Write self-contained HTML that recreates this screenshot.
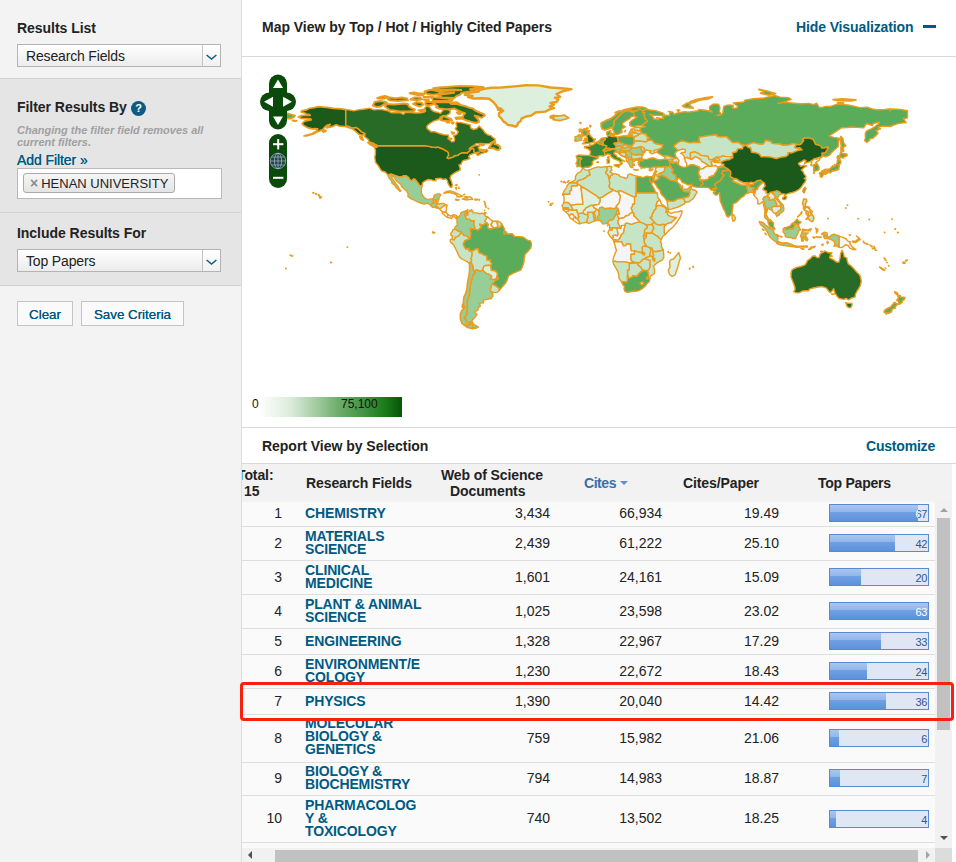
<!DOCTYPE html>
<html lang="en">
<head>
<meta charset="utf-8">
<title>Essential Science Indicators</title>
<style>
*{box-sizing:border-box;margin:0;padding:0}
html,body{width:956px;height:862px;overflow:hidden;background:#fff}
body{font-family:"Liberation Sans",Arial,sans-serif;font-size:14px;color:#222;position:relative}
a{color:#005a84;text-decoration:none}
#side{position:absolute;left:0;top:0;width:242px;height:862px;background:#f3f3f3;border-right:1px solid #dcdcdc}
.sec{position:absolute;left:0;width:241px}
.sec h3{position:absolute;left:17px;font-size:14px;font-weight:bold;color:#222;letter-spacing:-.04px;white-space:nowrap}
.sel{position:absolute;left:17px;width:204px;height:23px;border:1px solid #b4b4b4;background:linear-gradient(#fff,#ececec);font-size:14px;line-height:23px;padding-left:8px;color:#222;letter-spacing:-.16px}
.sel i{position:absolute;right:0;top:0;width:18px;height:21px;border-left:1px solid #c4c4c4;background:linear-gradient(#fff,#f1f1f1)}
.sel svg{position:absolute;right:3px;top:9px}
#s2{top:78px;height:135px;background:#e5e5e5;border-top:1px solid #d2d2d2;border-bottom:1px solid #d2d2d2}
#s3{top:213px;height:73px;background:#e5e5e5;border-bottom:1px solid #d2d2d2}
.note{position:absolute;left:17px;top:45px;font-size:11px;line-height:12px;font-style:italic;font-weight:bold;color:#a0a0a0;width:200px}
.q{position:absolute;left:131px;top:22px;width:15px;height:15px;border-radius:50%;background:#0b5b85;color:#fff;font-size:11px;font-weight:bold;text-align:center;line-height:15px}
.addf{position:absolute;left:17px;top:73px;font-weight:normal;font-size:14px;color:#005a84;letter-spacing:-.08px;text-shadow:0 0 .6px #005a84}
.fbox{position:absolute;left:17px;top:89px;width:205px;height:31px;border:1px solid #b9b9b9;background:#fff}
.tag{position:absolute;left:5px;top:4px;height:20px;width:152px;border:1px solid #aaa;border-radius:3px;background:linear-gradient(#f6f6f6,#e4e4e4);font-size:13px;line-height:18px;color:#222;white-space:nowrap;padding-left:6px}
.tag b{color:#8a8a8a;font-size:14px;font-weight:bold;margin-right:3px;position:relative;top:0}
.btn{position:absolute;top:301px;height:25px;border:1px solid #c4c4c4;background:#fafafa;color:#005a84;font-size:13.33px;line-height:25px;text-align:center;letter-spacing:0;text-shadow:0 0 .4px #005a84}
#main{position:absolute;left:242px;top:0;width:714px;height:862px;background:#fff}
.ttl{position:absolute;font-weight:bold;font-size:14px;color:#222;white-space:nowrap;letter-spacing:-.03px}
.lnk{position:absolute;font-weight:bold;font-size:14px;color:#005a84;white-space:nowrap;letter-spacing:-.12px}
.hl{position:absolute;left:0;width:714px;height:1px;background:#d9d9d9}
#legend{position:absolute;left:9px;top:397px;width:151px;height:20px;background:linear-gradient(90deg,#fff 0%,#fff 5%,#dcecdc 26%,#9cc89a 45%,#70ae6f 57%,#3f913f 76%,#1a7a1a 89%,#075507 100%);font-size:12px;line-height:15px;color:#111}
#legend span{position:absolute;top:0}
table{border-collapse:collapse}
#thead{position:absolute;left:0;top:464px;width:710px;height:38px;background:#f2f2f2;overflow:hidden}
#thead div{position:absolute;font-weight:bold;font-size:14px;color:#222;line-height:16px;letter-spacing:-.1px;white-space:nowrap}
#rows{position:absolute;left:0;top:502px;width:693px;height:346px;background:#fafafa;overflow:hidden}
.r{position:absolute;left:0;width:693px;border-bottom:1px solid #dedede}
.r span{position:absolute;white-space:nowrap;font-size:14px;color:#222}
.r .n{right:653px;text-align:right}
.r .f{left:63px;font-weight:bold;color:#005a84;line-height:13px;letter-spacing:-.14px;white-space:nowrap}
.r .d{right:385px}
.r .c{right:273px}
.r .p{right:156px}
.bar{position:absolute;left:587px;width:100px;height:18px;border:1px solid #5a8ad6;background:#dfe6f4}
.bar i{position:absolute;left:0;top:0;height:16px;overflow:hidden;background:linear-gradient(#a9c6f0 0%,#93b7eb 42%,#6fa0e2 46%,#5c91dc 100%)}
.bar em{position:absolute;left:0;width:98px;text-align:right;top:3px;font-style:normal;font-size:11px;line-height:12px;color:#34558f;letter-spacing:-.4px;padding-right:1px}
.bar i em{color:#fff}
</style>
</head>
<body>
<div id="side">
  <div class="sec" style="top:0;height:78px">
    <h3 style="top:20px">Results List</h3>
    <div class="sel" style="top:44px">Research Fields<i></i><svg width="11" height="7" viewBox="0 0 11 7"><path d="M0.6 1 L5.5 5 L10.4 1" fill="none" stroke="#0b5b85" stroke-width="1.5"/></svg></div>
  </div>
  <div class="sec" id="s2">
    <h3 style="top:20px">Filter Results By</h3><span class="q">?</span>
    <div class="note">Changing the filter field removes all current filters.</div>
    <a class="addf">Add Filter »</a>
    <div class="fbox"><div class="tag"><b>×</b>HENAN UNIVERSITY</div></div>
  </div>
  <div class="sec" id="s3">
    <h3 style="top:12px">Include Results For</h3>
    <div class="sel" style="top:36px">Top Papers<i></i><svg width="11" height="7" viewBox="0 0 11 7"><path d="M0.6 1 L5.5 5 L10.4 1" fill="none" stroke="#0b5b85" stroke-width="1.5"/></svg></div>
  </div>
  <div class="btn" style="left:17px;width:56px">Clear</div>
  <div class="btn" style="left:81px;width:103px">Save Criteria</div>
</div>
<div id="main">
  <div class="ttl" style="left:20px;top:19px">Map View by Top / Hot / Highly Cited Papers</div>
  <div class="lnk" style="left:554px;top:19px">Hide Visualization</div>
  <div style="position:absolute;left:681px;top:25px;width:13px;height:3px;background:#005a84"></div>
  <div class="hl" style="top:56px"></div>
<svg id="map" width="714" height="340" viewBox="0 0 714 340" style="position:absolute;left:0;top:56px;overflow:hidden"><g transform="translate(0,-56)" stroke="#ea9c1f" stroke-width="1.4" stroke-linejoin="round">
<path fill="#1b5a1b" d="M132.3,146.8 133.5,150.5 133.3,155.0 132.8,156.6 133.2,160.8 133.8,162.7 136.1,165.4 137.2,167.4 139.5,170.9 143.1,172.0 145.6,174.6 149.8,174.3 156.2,176.7 161.2,176.7 161.2,175.8 164.1,175.8 166.9,177.9 167.6,179.7 170.1,180.8 171.1,179.3 173.0,179.3 175.0,182.0 176.4,183.4 177.1,185.3 180.0,186.2 180.4,183.2 181.6,181.8 184.2,180.4 186.3,179.5 189.5,179.9 191.4,180.6 194.0,180.8 193.7,178.7 196.5,178.5 199.1,178.3 201.2,179.5 203.5,178.8 205.6,180.8 205.8,182.8 207.3,185.7 208.6,187.4 209.8,187.4 210.3,184.6 209.5,181.6 208.0,178.1 208.9,175.5 211.9,173.4 214.2,172.0 216.6,170.8 218.4,169.7 217.7,166.9 217.0,165.0 219.1,164.3 219.4,163.2 221.0,160.6 224.5,159.8 228.0,158.5 226.6,156.8 227.6,155.0 229.9,154.0 233.2,152.9 231.9,151.5 231.9,149.1 231.0,148.6 229.4,148.6 228.0,149.8 227.5,151.2 225.5,152.4 225.4,152.8 219.8,152.8 217.0,154.1 216.1,155.2 212.2,155.7 212.2,156.6 206.3,158.5 205.1,157.8 206.1,156.2 206.8,155.2 206.1,152.2 204.2,150.8 202.6,150.1 201.9,149.4 195.8,147.0 193.7,147.5 191.6,147.1 189.5,147.0 187.2,146.4 185.0,146.3 183.9,145.8 134.7,145.8 135.2,146.1 135.1,147.0Z"/>
<path fill="#1b5a1b" stroke-width="1.7" d="M103.8,109.7 99.4,108.8 91.5,108.3 84.5,107.4 76.4,106.7 72.2,107.6 67.0,108.5 64.4,109.9 59.7,110.9 59.1,112.0 63.5,113.2 64.4,114.2 67.3,114.4 68.2,115.5 63.8,115.1 60.0,115.6 56.3,116.7 59.3,118.5 65.2,118.6 68.8,118.8 69.1,120.0 66.1,120.4 62.6,121.2 60.0,123.7 61.8,125.6 64.4,126.9 67.0,128.2 70.5,128.8 73.1,128.6 75.8,128.8 74.7,130.9 70.5,133.5 66.1,134.7 62.1,135.9 65.2,135.8 67.0,135.2 71.4,134.0 74.0,132.6 77.5,130.9 80.7,129.5 82.2,127.7 84.5,125.6 86.2,124.8 88.2,124.4 85.9,126.5 84.8,127.9 88.9,126.9 91.5,126.1 94.1,124.8 97.6,126.1 102.9,126.5 105.8,127.2 109.9,128.8 111.6,129.6 114.2,131.8 116.9,134.4 120.0,135.2 123.0,134.7 123.0,133.5 119.5,131.8 117.0,129.3 114.2,127.4 109.7,127.9 106.9,126.3 103.8,126.0ZM80.1,130.7 83.6,130.0 84.0,131.1 81.3,132.1ZM77.5,196.2 79.4,197.2 78.2,198.2 77.5,197.2ZM76.4,194.8 77.5,195.3 76.8,195.4ZM73.7,193.7 74.5,194.1 74.0,194.2ZM71.0,192.7 71.7,192.8 71.4,193.2ZM50.4,120.4 54.8,120.9 52.1,121.2Z"/>
<path fill="#276b27" d="M103.8,109.7 107.2,109.9 111.6,110.9 116.0,109.9 121.2,109.2 125.6,108.6 127.4,108.1 131.8,109.9 138.8,109.4 145.8,110.8 149.2,112.7 158.0,112.7 161.5,114.4 163.2,112.5 168.5,112.5 173.8,113.0 179.0,112.9 182.5,112.0 183.4,109.9 182.5,108.5 185.1,105.7 188.1,107.6 189.5,109.9 192.1,111.6 196.5,112.5 198.2,113.5 200.7,111.1 200.9,109.4 206.1,109.5 208.2,110.8 207.9,113.4 204.4,115.5 200.0,116.0 198.6,117.8 196.5,119.5 191.6,121.2 188.6,123.0 186.0,124.8 184.8,126.5 185.1,128.6 188.1,130.9 188.6,131.8 193.0,131.8 197.4,133.5 201.8,134.7 206.5,135.1 206.7,138.8 207.9,140.1 209.6,141.7 212.2,141.4 212.6,139.6 212.2,137.0 211.4,135.8 214.9,134.4 216.3,131.8 213.1,128.8 214.9,126.5 214.0,123.9 214.5,122.1 219.2,122.6 224.5,123.9 228.0,124.8 228.9,128.2 231.5,129.5 235.0,128.6 237.1,126.0 241.1,130.0 242.9,132.6 245.5,134.7 249.0,135.6 250.2,137.0 252.9,138.8 253.0,140.5 250.8,141.6 247.2,143.6 242.9,143.8 238.5,143.5 234.1,143.6 232.4,145.2 229.8,146.6 227.1,148.9 229.2,147.7 232.4,145.9 236.8,145.4 238.0,146.1 236.2,147.5 237.1,149.2 237.6,150.6 239.4,151.2 242.4,151.4 244.4,149.2 245.9,151.0 243.8,152.4 239.4,153.4 235.9,155.4 234.6,154.7 234.8,153.8 237.6,152.2 235.9,152.2 233.2,152.9 231.9,151.5 231.9,149.1 231.0,148.6 229.4,148.6 228.0,149.8 227.5,151.2 225.5,152.4 225.4,152.8 219.8,152.8 217.0,154.1 216.1,155.2 212.2,155.7 212.2,156.6 206.3,158.5 205.1,157.8 206.1,156.2 206.8,155.2 206.1,152.2 204.2,150.8 202.6,150.1 201.9,149.4 195.8,147.0 193.7,147.5 191.6,147.1 189.5,147.0 187.2,146.4 185.0,146.3 183.9,145.8 134.7,145.8 134.9,145.2 132.1,144.0 129.1,142.6 126.8,141.4 126.5,139.6 124.2,137.9 122.5,136.5 123.0,134.7 123.0,133.5 119.5,131.8 117.0,129.3 114.2,127.4 109.7,127.9 106.9,126.3 103.8,126.0Z"/>
<path fill="#276b27" stroke-width="2.0" d="M126.0,142.6 131.2,143.6 134.4,146.3 134.5,147.0 131.8,146.3 128.2,144.4ZM117.8,136.8 120.0,137.0 121.2,140.1 119.0,138.8ZM246.7,148.0 249.0,144.9 251.1,141.7 253.4,141.4 252.5,144.0 256.0,144.9 257.8,146.6 258.3,148.4 256.9,149.9 253.4,149.4 251.6,148.2ZM238.0,149.6 242.0,150.1 240.6,151.0 238.5,150.5ZM237.8,144.2 242.0,145.1 239.4,145.2ZM198.2,117.4 201.8,116.4 204.4,117.2 208.8,119.0 210.0,120.2 205.2,120.7 200.9,120.7 198.2,119.9 200.0,118.6ZM193.0,102.3 200.0,102.2 207.0,102.3 209.6,104.1 214.0,103.9 218.4,105.0 223.6,106.2 227.1,107.6 231.0,108.5 233.2,110.4 237.6,112.5 242.0,114.2 242.9,115.5 239.4,117.8 236.2,116.4 232.7,115.6 236.2,119.5 237.1,121.6 234.1,123.0 230.6,122.1 225.4,120.7 220.1,118.6 214.3,119.0 213.5,117.8 221.0,116.9 221.3,115.1 223.1,113.2 219.2,112.0 214.9,109.9 212.6,108.6 207.0,109.2 201.8,109.0 197.4,108.5 193.9,107.2 195.6,105.9 193.0,104.6ZM144.9,108.0 147.5,109.9 151.9,110.4 158.0,111.5 165.9,111.6 172.0,110.9 172.9,109.4 169.4,108.1 166.8,106.4 165.9,104.1 161.5,103.4 157.1,104.1 151.9,104.5 144.9,103.9 143.1,106.4ZM130.9,105.5 134.4,106.9 138.8,106.5 141.4,104.6 144.9,102.9 143.1,101.7 137.9,101.1 132.6,102.0 131.8,103.8ZM171.1,103.8 174.6,105.5 178.1,106.5 181.1,104.6 179.9,102.7 174.6,102.2ZM183.4,102.0 183.4,104.6 186.9,105.5 192.5,103.8 192.1,102.2 187.8,101.8ZM176.4,110.4 179.9,111.5 183.4,110.9 181.6,109.4ZM145.8,99.4 149.2,100.6 155.4,101.1 161.5,100.4 165.9,100.2 165.0,98.5 159.8,97.6 153.6,98.2 147.5,97.6ZM135.2,98.2 141.4,98.8 146.6,97.1 143.1,96.0 137.9,97.1ZM168.5,99.4 174.6,100.2 179.9,99.2 178.1,97.5 172.0,97.6ZM181.6,97.1 189.5,97.6 191.2,100.8 200.0,101.1 209.6,101.0 210.8,99.4 205.2,98.5 193.9,97.6 188.6,96.8ZM181.6,99.5 186.0,100.8 186.9,99.7ZM182.5,91.5 185.1,94.1 191.2,94.7 196.5,94.1 199.1,92.4 195.6,91.0 188.6,89.8ZM191.2,88.3 198.2,89.8 210.5,89.6 219.2,90.1 210.5,90.6 201.8,91.0 197.4,92.4 202.6,93.2 212.2,92.7 202.6,94.0 195.6,94.7 199.1,96.4 193.9,97.5 203.5,97.8 212.2,98.0 214.3,96.2 218.4,94.5 219.2,92.9 228.0,91.5 234.1,89.8 238.5,88.7 228.0,89.2 235.0,88.0 242.0,88.0 241.1,87.0 230.6,86.2 217.5,86.1 204.4,87.0 196.5,87.5ZM167.6,93.2 175.5,95.0 180.8,95.2 182.5,93.8 176.4,93.2 172.0,92.5ZM208.8,102.7 214.9,102.3 217.5,103.9 211.4,104.1ZM206.1,138.4 209.6,138.8 208.2,139.3ZM209.6,132.1 212.2,133.0 210.8,133.9ZM209.6,122.5 211.7,122.6 210.8,123.7ZM204.4,121.4 207.0,121.4 207.3,122.5 205.2,122.6ZM214.9,112.5 219.2,112.5 218.4,113.9 215.8,113.7Z"/>
<path fill="#ddefdd" stroke-width="2.4" d="M222.8,94.7 230.6,96.0 226.2,97.1 231.5,98.5 239.4,98.2 247.2,98.8 249.0,100.2 251.6,102.3 254.2,105.5 255.1,107.6 259.5,109.0 256.0,109.9 261.2,110.8 256.9,113.4 256.9,116.0 259.5,118.6 261.2,121.2 263.9,123.0 265.6,124.8 270.0,125.5 273.5,126.7 275.2,125.6 276.1,123.0 278.8,120.9 279.6,118.6 284.0,116.5 289.2,115.6 293.6,112.5 303.2,111.6 308.5,109.0 312.0,108.1 307.6,106.4 312.0,104.6 308.5,102.9 314.6,102.0 316.4,99.4 312.9,97.6 318.1,96.8 314.6,94.1 319.9,91.5 329.5,89.2 319.0,88.3 308.5,87.5 296.2,85.4 284.0,85.2 270.0,86.6 259.5,87.5 249.0,87.7 242.0,88.9 235.9,90.6 236.8,91.5 229.8,92.4 223.6,93.6Z"/>
<path fill="#97ce97" d="M145.6,174.6 149.8,174.3 156.2,176.7 161.2,176.7 161.2,175.8 164.1,175.8 166.9,177.9 167.6,179.7 170.1,180.8 171.1,179.3 173.0,179.3 175.0,182.0 176.4,183.4 177.1,185.3 180.0,186.2 179.3,189.5 179.3,192.5 180.4,195.1 182.2,197.7 184.2,198.9 185.7,199.7 188.6,198.9 190.4,199.1 191.6,197.7 192.3,195.1 195.6,193.9 198.2,193.9 198.6,195.1 197.2,197.4 196.8,199.5 196.0,199.1 194.6,200.2 191.2,200.3 192.1,203.3 190.0,203.3 189.2,205.9 186.9,203.8 185.1,203.2 182.5,204.0 179.0,203.2 175.5,201.8 172.0,200.0 168.8,198.6 165.9,196.5 166.2,193.9 165.0,191.6 162.4,189.0 159.8,186.7 158.9,184.6 156.8,182.7 154.2,180.8 152.4,177.2 149.8,175.8 149.8,178.1 151.9,180.8 153.6,183.4 155.7,186.0 157.1,188.6 158.9,190.9 158.0,191.4 156.2,189.5 154.2,187.8 152.8,185.1 150.1,183.4 149.6,181.1 148.0,179.3 146.6,176.9Z"/>
<path fill="#97ce97" d="M189.2,205.9 190.0,203.3 192.1,203.3 191.2,200.3 194.6,200.2 194.4,203.5 196.0,204.0 194.4,205.4 193.9,206.7 192.7,207.3 190.4,207.2Z"/>
<path fill="#f5f5f5" d="M194.6,200.2 196.0,199.1 196.3,200.9 195.3,203.5 194.4,203.5Z"/>
<path fill="#c6e4c6" d="M192.7,207.3 193.9,206.7 195.6,207.0 196.8,208.1 195.6,208.4Z"/>
<path fill="#c6e4c6" d="M194.4,205.4 196.0,204.0 198.2,203.7 201.8,203.5 204.9,205.2 202.1,205.6 200.0,207.2 198.2,208.8 196.8,208.1 195.6,207.0 193.9,206.7Z"/>
<path fill="#f5f5f5" d="M198.2,208.8 200.0,207.2 202.1,205.6 204.9,205.2 204.4,208.8 204.0,212.2 202.1,212.2 200.5,212.1 197.4,209.1Z"/>
<path fill="#f5f5f5" d="M200.5,212.1 202.1,212.2 204.0,212.2 206.0,214.7 205.4,217.3 204.0,216.6 201.8,214.5 200.3,213.5Z"/>
<path fill="#f5f5f5" d="M205.4,217.3 206.0,214.7 208.8,216.1 211.4,214.7 214.0,215.2 215.0,216.4 214.2,218.7 213.1,217.0 210.8,216.4 209.6,218.7 207.9,218.0Z"/>
<path fill="#f5f5f5" d="M201.9,193.2 204.7,191.4 207.9,190.9 211.4,191.8 214.9,193.3 217.8,194.8 220.7,196.2 219.2,196.7 214.9,196.7 215.2,195.4 213.1,194.2 209.6,193.0 207.0,192.3 204.4,192.8Z"/>
<path fill="#f5f5f5" d="M220.3,199.1 223.6,199.7 225.0,199.8 225.0,197.0 222.8,196.7 223.1,198.2Z"/>
<path fill="#f5f5f5" d="M225.0,199.8 227.1,199.5 230.8,199.3 229.4,197.7 228.0,197.0 225.0,197.0Z"/>
<path fill="#c6e4c6" d="M213.5,199.3 217.0,199.8 215.8,200.3 213.7,200.0Z"/>
<path fill="#c6e4c6" d="M232.9,199.1 235.5,199.3 235.2,200.0 232.9,200.0Z"/>
<path fill="#f5f5f5" d="M213.5,184.9 215.2,184.6 214.3,185.7ZM213.5,187.8 214.5,187.8 214.3,189.5ZM216.6,187.2 217.3,188.3 216.8,188.4ZM221.5,194.6 222.8,194.2 222.2,194.9Z"/>
<path fill="#c6e4c6" d="M242.4,212.6 243.9,212.6 243.8,213.8 242.4,213.8Z"/>
<path fill="#97ce97" d="M215.0,216.4 216.1,217.5 218.2,215.1 219.2,212.6 220.7,211.9 223.6,210.8 225.7,209.8 225.7,210.8 223.6,212.4 222.8,215.2 223.8,216.8 224.5,219.2 227.8,219.2 229.0,220.8 232.4,220.7 231.9,223.6 232.7,227.1 233.4,229.4 228.4,228.5 228.2,230.4 229.0,233.2 228.0,238.8 226.8,238.2 224.5,235.7 221.9,235.5 218.7,231.7 215.8,231.0 212.6,229.1 213.1,227.1 215.4,224.8 214.9,221.9 215.2,219.8 214.2,218.7Z"/>
<path fill="#c6e4c6" d="M225.7,209.8 225.7,210.8 223.6,212.4 222.8,215.2 223.8,216.8 224.5,219.2 227.8,219.2 229.0,220.8 232.4,220.7 231.9,223.6 232.7,227.1 233.4,229.4 235.9,230.1 238.5,228.0 239.6,227.3 237.6,224.3 240.6,225.0 243.8,223.6 244.3,222.4 243.1,221.2 243.6,219.8 245.5,216.8 243.8,216.4 242.4,214.3 240.6,213.1 237.6,213.7 235.0,212.9 231.1,212.9 231.0,211.9 228.0,210.2 227.6,211.6 225.2,212.6 226.2,214.9 224.7,215.4 224.9,212.2Z"/>
<path fill="#f5f5f5" d="M243.1,221.2 243.6,219.8 245.5,216.8 248.1,219.2 250.4,221.0 250.2,222.8 249.0,224.5 251.6,228.2 248.1,229.2 246.0,228.3 245.5,226.6 246.2,224.5 244.3,222.4Z"/>
<path fill="#f5f5f5" d="M250.4,221.0 252.7,221.2 256.0,221.3 255.1,222.9 256.0,225.4 254.9,227.5 252.5,227.7 251.6,228.2 249.0,224.5 250.2,222.8Z"/>
<path fill="#c6e4c6" d="M256.0,221.3 257.9,222.1 260.0,224.2 258.4,227.1 256.4,227.5 254.9,227.5 256.0,225.4 255.1,222.9Z"/>
<path fill="#c6e4c6" d="M212.6,229.1 215.8,231.0 218.7,231.7 218.2,234.1 216.5,236.1 213.5,237.4 212.2,240.2 210.0,239.2 210.2,237.3 210.8,235.9 208.9,235.5 208.9,233.2 210.3,231.5 210.5,230.1Z"/>
<path fill="#c6e4c6" d="M210.0,239.2 212.2,240.2 213.5,237.4 216.5,236.1 218.2,234.1 218.7,231.7 221.9,235.5 224.5,235.7 226.8,238.2 228.0,238.8 222.9,240.6 221.2,244.3 222.9,247.6 224.1,249.0 227.0,248.1 227.0,250.8 228.9,250.8 230.3,253.4 229.8,256.9 228.9,258.4 229.8,260.6 228.7,262.1 227.3,263.5 225.4,261.8 221.9,260.0 218.9,258.4 216.8,255.7 215.4,252.5 213.7,249.0 211.4,244.6 208.4,242.0 208.2,239.7Z"/>
<path fill="#c6e4c6" d="M228.9,250.8 230.3,253.4 229.8,256.9 228.9,258.4 229.8,260.6 228.7,262.1 230.6,265.6 231.1,269.1 231.9,271.4 233.2,271.4 234.5,269.6 238.0,271.4 240.6,270.0 241.5,267.4 242.4,265.8 247.1,265.3 248.6,266.1 249.9,263.4 248.3,261.8 248.5,260.0 245.1,260.0 244.6,255.7 242.4,255.1 239.4,253.4 236.8,252.5 236.2,248.7 234.0,248.8 230.6,250.8Z"/>
<path fill="#5aab5a" d="M228.0,238.8 229.0,233.2 228.2,230.4 228.4,228.5 233.4,229.4 235.9,230.1 238.5,228.0 239.6,227.3 237.6,224.3 240.6,225.0 243.8,223.6 244.3,222.4 246.2,224.5 245.5,226.6 246.0,228.3 248.1,229.2 251.6,228.2 252.5,227.7 254.9,227.5 256.4,227.5 258.4,227.1 260.0,224.2 262.1,228.3 263.0,231.5 265.6,234.1 270.0,233.6 272.6,236.4 277.9,236.6 281.4,237.3 285.4,240.1 288.7,241.1 289.6,244.6 288.7,248.1 285.8,251.6 283.1,254.2 282.2,258.6 281.9,262.6 280.5,266.5 278.8,270.0 274.4,271.8 270.9,273.3 266.5,275.9 265.4,279.6 263.9,282.8 261.2,285.8 258.6,288.9 257.1,290.5 256.9,288.4 253.4,285.6 249.7,284.4 252.7,281.0 256.5,278.6 254.9,276.3 255.5,273.5 253.2,271.1 249.2,270.2 248.6,266.1 249.9,263.4 248.3,261.8 248.5,260.0 245.1,260.0 244.6,255.7 242.4,255.1 239.4,253.4 236.8,252.5 236.2,248.7 234.0,248.8 230.6,250.8 228.9,250.8 227.0,250.8 227.0,248.1 224.1,249.0 222.9,247.6 221.2,244.3 222.9,240.6ZM261.6,231.8 263.9,231.8 265.3,233.2 262.1,234.3Z"/>
<path fill="#ddefdd" d="M241.5,267.4 242.4,265.8 247.1,265.3 248.6,266.1 249.2,270.2 253.2,271.1 255.5,273.5 254.9,276.3 254.6,278.2 252.9,279.4 249.7,279.3 247.9,279.1 249.7,276.3 247.6,274.7 243.8,273.1 240.9,270.4Z"/>
<path fill="#c6e4c6" d="M249.7,284.4 253.4,285.6 256.9,288.4 257.1,290.5 255.1,292.4 251.6,292.6 248.3,291.0 248.6,288.4Z"/>
<path fill="#97ce97" d="M233.2,271.4 234.5,269.6 238.0,271.4 240.6,270.0 240.9,270.4 243.8,273.1 247.6,274.7 249.7,276.3 247.9,279.1 249.7,279.3 252.9,279.4 254.6,278.2 254.9,276.3 256.5,278.6 252.7,281.0 249.7,284.4 248.6,288.4 248.3,291.0 250.4,293.6 251.1,295.9 249.0,298.5 244.6,299.6 241.6,299.8 241.5,302.9 236.8,303.2 238.5,305.9 236.4,307.6 235.9,310.2 232.4,312.0 235.0,314.6 232.4,318.1 229.8,320.8 230.8,323.0 228.0,322.5 224.5,322.3 224.0,319.9 222.2,318.1 224.5,314.6 224.9,310.2 225.4,305.9 225.0,301.5 226.2,298.0 227.3,294.5 227.6,291.0 228.0,287.5 228.4,284.0 229.8,279.6 230.8,275.2 232.7,273.5ZM230.5,323.7 236.4,327.2 234.1,327.9 230.5,327.6Z"/>
<path fill="#97ce97" stroke-width="1.7" d="M228.7,262.1 230.6,265.6 231.1,269.1 231.9,271.4 233.2,271.4 232.7,273.5 230.8,275.2 229.8,279.6 228.4,284.0 228.0,287.5 227.6,291.0 227.3,294.5 226.2,298.0 225.0,301.5 225.4,305.9 224.9,310.2 224.5,314.6 222.2,318.1 224.0,319.9 224.5,322.3 228.0,322.5 230.8,323.0 227.1,325.1 223.6,325.5 220.1,323.4 218.4,319.0 218.4,313.8 220.1,310.2 222.8,307.6 221.0,305.0 221.5,301.5 221.9,297.1 223.6,293.6 225.0,289.2 225.4,284.0 226.2,279.6 227.1,275.2 227.6,270.0 227.6,265.6 227.3,263.5ZM230.5,323.7 230.5,327.6 234.1,327.9 230.6,328.8 225.4,327.4 221.9,325.1 226.2,325.6 228.0,323.9ZM220.5,304.6 221.9,305.0 221.5,307.4 220.3,307.1Z"/>
<path fill="#c6e4c6" d="M190.4,232.0 191.6,232.0 191.2,233.2ZM192.1,232.4 192.8,232.6 192.5,232.9Z"/>
<path fill="#c6e4c6" stroke-width="1.8" d="M308.0,116.7 311.1,115.3 314.6,116.0 319.0,115.6 322.5,115.1 324.9,116.9 326.7,117.8 324.2,119.0 318.1,120.5 314.6,120.2 311.1,119.7 312.0,118.5 308.5,117.9 312.0,117.0Z"/>
<path fill="#c6e4c6" d="M337.7,122.5 339.1,122.6 338.4,123.7Z"/>
<path fill="#97ce97" d="M333.0,136.6 335.6,136.1 336.1,134.9 337.7,134.9 337.4,136.1 339.5,136.8 340.0,138.8 339.3,140.1 336.5,140.9 333.4,141.4 332.5,140.1 333.9,138.8 333.0,137.9Z"/>
<path fill="#5aab5a" stroke-width="1.8" d="M345.1,135.2 347.0,133.9 345.2,133.5 347.0,131.8 347.4,130.7 343.5,130.7 345.1,128.9 341.8,128.9 340.4,130.9 339.6,132.6 340.9,134.4 341.8,135.6 344.4,135.4ZM337.4,129.5 339.6,129.3 338.6,130.4 337.6,131.8ZM347.9,125.5 348.9,126.0 348.1,126.7ZM344.7,128.1 345.9,128.2 345.1,128.6ZM339.1,130.9 340.2,131.4 339.5,131.8Z"/>
<path fill="#5aab5a" d="M345.2,138.1 342.6,138.2 343.1,139.6 341.4,140.7 344.9,141.4 345.8,141.2 345.1,139.6Z"/>
<path fill="#97ce97" d="M337.7,134.9 340.0,134.9 340.9,136.1 339.5,136.8 337.4,136.1Z"/>
<path fill="#276b27" d="M340.5,143.8 344.4,143.5 348.8,142.8 352.8,141.9 351.4,141.4 353.5,139.3 351.0,138.8 350.3,137.5 348.4,135.9 347.7,134.4 347.0,133.9 345.1,135.2 344.4,135.4 345.2,137.4 345.2,138.1 345.1,139.6 345.8,141.2 344.9,141.4 343.1,141.9Z"/>
<path fill="#3b8c3b" d="M347.4,155.6 348.4,153.4 348.4,151.0 346.6,149.2 342.6,147.7 342.3,146.8 345.2,146.1 347.7,146.4 347.5,144.7 348.8,145.1 350.9,144.9 353.3,143.1 354.9,142.1 357.9,144.2 358.9,143.8 360.6,144.9 361.7,144.9 364.9,145.8 363.8,148.2 361.0,150.6 362.8,151.2 362.4,152.6 362.8,154.1 363.6,154.9 361.0,156.1 358.9,155.6 356.1,156.1 355.9,157.3 353.5,157.1 351.7,156.6ZM365.6,157.3 366.9,156.2 367.1,158.0 366.6,159.1 365.6,158.2Z"/>
<path fill="#3b8c3b" d="M347.4,155.6 351.7,156.6 353.5,157.1 355.9,157.3 356.1,158.2 354.2,159.2 351.9,160.1 350.0,162.4 350.9,163.6 349.3,165.7 346.6,167.3 342.8,167.3 340.7,168.5 339.3,167.1 337.6,166.4 338.2,164.6 337.7,162.4 338.4,159.8 339.6,158.7 338.9,158.0 336.1,158.0 334.9,158.2 334.2,156.2 336.5,155.0 340.4,155.2 343.9,155.4ZM354.7,162.2 356.1,161.7 356.4,162.2 355.9,162.7ZM319.0,181.1 319.5,181.6 319.0,181.8ZM320.9,181.8 322.3,181.4 321.4,182.5ZM322.9,182.5 323.6,182.3 323.4,183.0ZM325.1,182.3 326.4,181.3 325.6,182.3ZM326.2,180.8 327.1,180.4 326.7,180.9Z"/>
<path fill="#5aab5a" d="M334.9,158.2 336.1,158.0 338.9,158.0 339.6,158.7 338.4,159.8 337.7,162.4 338.2,164.6 337.6,166.4 334.9,166.8 335.1,164.3 333.9,163.8 334.9,161.5 335.3,159.8Z"/>
<path fill="#3b8c3b" d="M363.6,154.9 362.8,154.1 362.4,152.6 362.8,151.2 365.4,150.5 366.8,150.3 368.9,149.6 371.9,149.2 374.5,150.1 374.6,151.7 372.2,152.1 372.0,154.1 374.3,155.4 375.4,157.3 378.5,158.2 378.9,159.1 382.9,161.3 380.2,160.6 379.4,162.0 380.4,163.2 378.7,165.0 378.0,165.2 378.3,163.8 378.0,161.5 375.9,160.4 372.6,159.1 369.9,157.3 368.9,156.2 368.4,154.7 365.9,153.8ZM372.2,165.0 377.8,164.5 376.9,167.3 372.4,165.7ZM364.9,159.8 367.3,159.6 367.6,160.6 367.3,162.9 365.2,163.2 365.2,161.0Z"/>
<path fill="#276b27" d="M362.8,137.7 365.4,137.4 365.6,135.4 367.8,135.6 369.8,136.5 372.4,136.3 375.4,137.2 375.7,138.8 376.1,139.6 376.8,142.2 371.9,143.5 374.6,146.3 373.2,148.4 368.4,148.7 367.3,148.4 363.8,148.2 364.9,145.8 361.7,144.9 361.2,143.8 361.0,142.6 361.0,140.9 362.8,140.1 363.1,138.4Z"/>
<path fill="#5aab5a" d="M356.4,141.6 357.9,141.6 360.6,142.1 361.0,142.6 361.0,140.9 362.8,140.1 363.1,138.4 362.8,137.7 360.1,138.1 358.9,138.8 357.5,140.5Z"/>
<path fill="#5aab5a" d="M354.9,142.1 356.4,141.6 357.9,141.6 360.6,142.1 361.0,142.6 361.2,143.8 360.6,144.9 358.9,143.8 357.9,144.2Z"/>
<path fill="#c6e4c6" d="M360.6,144.9 361.2,143.8 361.7,144.9Z"/>
<path fill="#5aab5a" d="M361.0,150.6 363.8,148.2 367.3,148.4 368.9,149.6 366.8,150.3 365.4,150.5 362.8,151.2Z"/>
<path fill="#97ce97" d="M367.3,148.4 368.4,148.7 373.2,148.4 374.6,146.3 376.8,145.8 380.2,146.4 380.4,147.5 378.7,149.4 374.5,150.1 371.9,149.2 368.9,149.6Z"/>
<path fill="#5aab5a" d="M365.6,135.4 364.7,134.2 364.9,131.8 368.9,130.5 368.5,132.4 369.6,132.8 367.8,134.9 367.8,135.6ZM369.8,134.0 372.4,133.5 372.2,135.2 370.1,135.2ZM367.6,134.4 369.2,134.4 369.1,135.2Z"/>
<path fill="#5aab5a" stroke-width="1.8" d="M362.8,130.0 360.1,128.6 359.2,126.5 359.2,123.0 364.5,120.4 368.9,118.6 372.4,116.0 375.9,112.5 381.1,110.2 387.2,108.6 395.1,107.2 400.4,107.2 404.8,108.5 404.4,109.4 401.1,110.8 396.9,109.0 395.1,110.8 391.6,111.5 388.1,110.2 386.4,110.6 382.0,111.8 379.4,113.4 377.6,115.5 375.9,117.2 374.5,119.0 371.9,121.2 372.4,123.9 371.1,126.9 370.4,128.2 368.9,127.7 366.2,128.9ZM373.2,112.5 377.6,110.9 376.8,111.8Z"/>
<path fill="#5aab5a" d="M370.4,128.2 371.1,126.9 372.4,123.9 371.9,121.2 374.5,119.0 375.9,117.2 377.6,115.5 379.4,113.4 382.0,111.8 386.4,110.6 391.6,112.7 392.5,116.4 389.0,116.9 387.8,118.6 383.8,120.9 380.8,123.0 380.6,125.3 383.6,126.7 379.9,128.9 379.2,131.8 378.5,133.1 375.4,134.6 373.1,134.6 372.7,133.1 371.3,130.9ZM382.4,131.8 383.8,130.2 383.4,131.2ZM379.2,133.1 380.4,131.2 379.7,132.6Z"/>
<path fill="#5aab5a" d="M386.4,110.6 388.1,110.2 391.6,111.5 395.1,110.8 396.9,109.0 401.1,110.8 400.4,112.1 403.0,113.0 401.4,114.4 403.0,116.5 402.5,118.1 403.9,119.1 405.6,121.4 401.2,124.4 399.1,125.6 396.0,125.8 390.8,126.7 387.9,125.5 387.8,122.3 389.5,120.7 393.4,118.1 394.9,116.9 392.5,116.4 391.6,112.7Z"/>
<path fill="#5aab5a" d="M375.4,137.2 379.4,136.1 382.9,135.8 385.1,136.3 390.4,136.3 391.6,137.2 392.3,139.3 391.8,141.2 392.5,142.6 390.1,145.6 385.5,145.2 383.4,144.9 380.2,143.5 376.8,142.2 376.1,139.6 375.7,138.8Z"/>
<path fill="#97ce97" d="M371.9,143.5 376.8,142.2 380.2,143.5 383.4,144.9 380.2,146.4 376.8,145.8 374.6,146.3Z"/>
<path fill="#c6e4c6" d="M380.2,146.4 383.4,144.9 385.5,145.2 390.1,145.6 389.2,146.8 386.4,146.6 383.4,147.9 380.4,147.5Z"/>
<path fill="#97ce97" d="M378.7,149.4 380.4,147.5 383.4,147.9 386.4,146.6 389.2,146.8 390.6,147.7 387.2,150.6 383.4,151.2 381.1,151.2 379.4,150.1Z"/>
<path fill="#c6e4c6" d="M374.5,150.1 378.7,149.4 379.4,150.1 377.3,151.9 374.6,151.7Z"/>
<path fill="#c6e4c6" d="M374.1,151.9 377.3,151.9 379.4,150.1 381.1,151.2 383.4,151.2 383.8,152.8 380.2,152.4 378.1,152.4 378.5,154.5 381.1,156.2 382.9,157.1 380.2,156.2 376.8,153.6 375.5,152.4Z"/>
<path fill="#c6e4c6" d="M378.1,152.4 380.2,152.4 383.8,152.8 384.4,154.5 384.1,155.4 382.9,156.8 381.1,156.2 378.5,154.5Z"/>
<path fill="#97ce97" d="M383.8,152.8 383.4,151.2 387.2,150.6 389.9,153.6 389.7,156.2 389.5,157.5 386.4,158.0 385.5,156.8 384.1,155.4 384.4,154.5Z"/>
<path fill="#c6e4c6" d="M382.9,157.1 382.9,156.8 384.1,155.4 385.5,156.8 384.4,158.2Z"/>
<path fill="#c6e4c6" d="M384.4,158.2 385.5,156.8 386.4,158.0 386.6,159.8 387.2,159.9 385.5,162.0 384.3,160.6Z"/>
<path fill="#c6e4c6" d="M386.4,158.0 389.5,157.5 390.8,159.2 387.2,159.9 386.6,159.8Z"/>
<path fill="#97ce97" d="M385.5,162.0 387.2,159.9 390.8,159.2 393.4,158.9 396.5,158.5 396.0,160.1 392.5,160.3 392.5,161.5 390.6,160.6 390.4,162.4 391.3,163.2 392.5,165.0 392.5,165.5 390.8,165.0 390.4,165.9 390.9,167.6 389.7,167.6 388.5,167.1 387.8,165.5 387.2,164.3 386.7,163.4ZM391.6,169.4 396.5,169.9 393.7,170.4ZM399.0,168.1 399.9,167.8 399.3,168.7ZM396.0,162.7 397.1,163.1 396.4,163.2Z"/>
<path fill="#c6e4c6" d="M389.7,156.2 389.9,154.1 394.2,155.0 397.8,154.3 400.6,155.0 399.5,158.0 396.5,158.5 393.4,158.9 390.8,159.2 389.5,157.5Z"/>
<path fill="#97ce97" d="M387.2,150.6 390.6,147.7 394.1,148.0 397.1,147.0 399.7,149.4 399.9,151.9 402.5,152.2 400.6,155.0 397.8,154.3 394.2,155.0 389.9,154.1 389.9,153.6Z"/>
<path fill="#c6e4c6" d="M397.1,147.0 399.5,146.8 401.6,147.7 403.2,150.3 399.9,151.9 399.7,149.4Z"/>
<path fill="#c6e4c6" d="M389.2,146.8 390.1,145.6 392.5,142.6 391.8,141.2 395.1,140.7 399.5,141.2 403.9,141.7 406.1,140.3 410.0,140.0 412.6,143.3 417.0,144.2 420.7,144.7 420.1,147.9 417.4,149.1 414.4,149.8 411.4,150.6 412.6,152.2 414.4,152.1 411.8,153.1 410.0,153.8 409.1,153.4 407.4,152.1 409.3,150.8 406.5,150.5 404.4,149.9 402.5,152.2 399.9,151.9 403.2,150.3 401.6,147.7 399.5,146.8 397.1,147.0 394.1,148.0 390.6,147.7Z"/>
<path fill="#c6e4c6" d="M391.8,141.2 392.3,139.3 391.6,137.2 395.6,135.4 397.1,134.0 399.9,133.1 404.6,134.2 404.4,135.6 407.7,138.1 405.3,138.8 406.1,140.3 403.9,141.7 399.5,141.2 395.1,140.7Z"/>
<path fill="#c6e4c6" d="M387.4,134.7 387.2,133.3 389.0,132.8 394.1,132.8 397.1,134.0 395.6,135.4 391.6,137.2 390.4,136.3 390.4,135.4 387.8,134.9Z"/>
<path fill="#c6e4c6" d="M387.2,133.3 388.1,130.9 390.1,130.5 391.3,131.8 393.2,130.2 398.4,130.9 399.9,133.1 397.1,134.0 394.1,132.8 389.0,132.8Z"/>
<path fill="#c6e4c6" d="M393.2,130.2 391.6,128.8 391.6,127.9 395.1,127.2 399.5,127.4 398.4,128.6 398.4,130.9ZM388.8,129.1 390.8,128.9 389.9,130.0Z"/>
<path fill="#5aab5a" d="M396.0,160.1 396.5,158.5 399.5,158.0 401.2,159.4 398.6,159.9ZM401.2,159.4 405.6,159.2 409.1,158.0 411.8,158.0 414.4,159.2 417.9,159.9 423.1,158.9 426.6,159.6 427.0,161.1 428.9,162.0 428.0,165.0 428.9,166.4 424.7,166.6 420.5,167.1 417.0,167.1 414.7,167.1 413.9,168.5 413.5,166.9 410.9,167.1 408.2,168.3 404.8,167.1 402.1,168.1 398.3,166.9 396.5,164.5 397.4,162.4 396.4,162.4 396.9,161.0 401.2,160.6Z"/>
<path fill="#c6e4c6" d="M407.0,170.2 408.2,169.6 411.1,169.0 409.8,170.2 408.2,170.9Z"/>
<path fill="#c6e4c6" d="M340.2,168.9 341.2,168.7 343.5,169.9 346.6,170.1 347.5,172.5 348.2,175.0 345.2,176.0 344.2,177.4 341.4,179.2 338.2,179.9 335.3,181.3 335.3,183.0 327.4,183.0 330.4,181.6 333.0,180.1 333.5,178.1 333.4,176.4 335.6,173.2 338.6,171.8Z"/>
<path fill="#c6e4c6" d="M335.3,183.0 335.3,186.0 329.5,186.0 329.5,190.4 327.8,191.2 327.8,194.2 320.9,194.2 320.7,195.1 320.8,193.7 322.5,190.4 324.4,187.8 325.1,185.7 327.4,183.0Z"/>
<path fill="#f5f5f5" d="M320.7,195.1 320.9,194.2 327.8,194.2 327.8,191.2 329.5,190.4 329.5,186.0 335.3,186.0 335.3,183.6 341.9,187.8 339.1,187.8 340.0,195.4 340.9,203.0 340.9,204.4 333.9,204.4 331.9,205.1 330.0,204.6 329.9,205.6 329.1,205.9 328.1,204.7 327.1,203.5 324.9,202.4 322.3,202.6 321.6,203.3 322.1,199.8 322.0,197.2 321.6,195.4Z"/>
<path fill="#c6e4c6" d="M346.6,170.1 350.5,168.7 353.1,167.6 355.8,166.9 359.8,167.3 363.3,166.6 365.6,166.9 364.9,167.8 365.2,169.9 365.0,170.9 363.6,172.2 363.8,173.2 365.2,174.3 366.2,175.3 367.1,178.7 367.6,182.0 367.8,184.2 367.5,185.1 366.8,185.8 368.5,188.8 370.8,189.3 371.5,190.4 365.6,193.7 360.5,197.2 358.0,197.9 356.1,198.1 355.9,197.0 353.6,195.4 341.9,187.8 335.3,183.6 335.3,181.3 338.2,179.9 341.4,179.2 344.2,177.4 345.2,176.0 348.2,175.0 347.5,172.5Z"/>
<path fill="#c6e4c6" d="M365.6,166.9 367.1,166.2 368.4,166.4 369.9,166.8 369.1,167.8 369.6,169.0 369.9,169.9 368.0,171.6 368.2,172.2 369.9,173.2 370.6,173.6 370.4,174.8 368.5,176.0 368.0,178.1 367.1,178.7 366.2,175.3 365.2,174.3 363.8,173.2 363.6,172.2 365.0,170.9 365.2,169.9 364.9,167.8Z"/>
<path fill="#c6e4c6" d="M370.6,173.6 373.6,173.9 377.1,175.0 378.0,176.6 381.6,177.4 383.9,178.5 385.5,177.2 385.7,175.1 388.1,173.9 391.1,175.1 394.6,176.2 394.1,179.0 394.2,180.4 394.2,193.0 394.2,196.5 392.5,196.5 392.5,197.4 378.3,190.6 376.8,191.2 375.4,191.9 371.5,190.4 370.8,189.3 368.5,188.8 366.8,185.8 367.5,185.1 367.8,184.2 367.6,182.0 367.1,178.7 368.0,178.1 368.5,176.0 370.4,174.8Z"/>
<path fill="#5aab5a" d="M394.6,176.2 397.8,176.6 401.2,177.6 403.9,176.4 404.8,176.2 407.0,176.7 410.4,176.7 411.6,179.9 410.5,182.8 408.6,181.6 407.6,179.2 409.1,182.8 410.0,185.1 412.6,189.5 413.0,191.2 415.1,193.0 394.2,193.0 394.2,180.4 394.1,179.0Z"/>
<path fill="#c6e4c6" d="M415.1,193.0 415.6,194.8 415.6,197.2 417.9,200.0 415.2,201.8 414.2,205.2 414.4,206.5 413.9,208.8 412.1,210.5 411.6,212.2 410.4,214.0 410.2,216.6 408.2,217.7 410.0,219.2 412.3,222.1 410.0,224.2 408.2,224.8 404.8,225.0 404.4,225.4 402.1,223.6 398.4,222.4 394.8,218.7 392.5,216.3 391.6,215.8 392.0,214.0 390.6,212.2 389.5,209.3 389.0,207.9 390.1,206.7 390.8,204.0 392.5,204.0 392.5,197.4 392.5,196.5 394.2,196.5 394.2,193.0Z"/>
<path fill="#f5f5f5" d="M417.9,200.0 419.3,203.7 419.6,204.2 422.6,206.1 425.9,209.3 424.7,209.6 421.9,206.8 418.8,205.8 416.8,205.4 414.4,206.5 414.2,205.2 415.2,201.8Z"/>
<path fill="#f5f5f5" d="M425.9,209.3 426.4,210.7 426.1,211.4 425.4,212.4 423.6,212.2 424.7,209.6Z"/>
<path fill="#c6e4c6" d="M414.4,206.5 416.8,205.4 418.8,205.8 421.9,206.8 424.7,209.6 423.6,212.2 425.4,212.4 425.8,214.9 427.5,215.9 432.8,217.5 434.5,217.5 429.2,222.8 425.8,223.4 423.8,224.7 420.5,224.5 417.2,225.2 413.5,223.8 412.3,222.1 410.0,219.2 408.2,217.7 410.2,216.6 410.4,214.0 411.6,212.2 412.1,210.5 413.9,208.8Z"/>
<path fill="#f5f5f5" d="M425.4,212.4 426.1,211.4 428.4,213.3 429.2,213.3 432.8,212.1 436.2,211.7 439.9,210.7 439.8,213.3 438.0,217.5 436.2,220.1 434.5,222.8 431.0,227.1 429.8,228.0 426.6,230.6 423.3,234.5 422.2,233.1 422.2,231.5 422.2,226.6 423.8,224.7 425.8,223.4 429.2,222.8 434.5,217.5 432.8,217.5 427.5,215.9 425.8,214.9Z"/>
<path fill="#c6e4c6" d="M423.3,234.5 420.9,236.2 419.1,239.7 416.5,237.6 416.3,236.8 410.0,233.2 410.0,231.2 410.9,229.6 411.8,228.5 410.0,224.2 412.3,222.1 413.5,223.8 417.2,225.2 420.5,224.5 423.8,224.7 422.2,226.6 422.2,231.5 422.2,233.1Z"/>
<path fill="#c6e4c6" d="M410.0,224.2 411.8,228.5 410.9,229.6 410.0,231.2 410.0,233.2 404.4,233.2 402.3,233.9 402.5,230.6 403.0,229.4 405.3,227.7 404.4,225.4 404.8,225.0 408.2,224.8Z"/>
<path fill="#c6e4c6" d="M419.1,239.7 418.4,242.0 419.6,243.8 419.3,246.4 421.2,249.7 417.0,251.3 411.8,251.8 411.1,251.8 410.0,248.1 408.1,247.9 404.8,246.6 404.4,246.0 402.3,242.9 401.9,239.4 403.9,237.6 404.4,235.7 404.4,233.2 410.0,233.2 416.3,236.8 416.5,237.6Z"/>
<path fill="#c6e4c6" d="M402.3,233.9 404.4,233.2 404.4,235.7 401.2,236.2Z"/>
<path fill="#f5f5f5" d="M401.2,236.2 404.4,235.7 403.9,237.6 401.9,239.4Z"/>
<path fill="#c6e4c6" d="M371.9,241.7 372.4,240.2 373.2,239.6 375.7,240.1 377.1,239.0 378.5,236.8 378.9,235.0 381.5,232.4 382.0,228.9 383.1,225.4 382.9,224.0 384.6,222.8 389.7,224.3 391.6,223.3 394.8,222.4 398.4,222.4 402.1,223.6 404.4,225.4 405.3,227.7 403.0,229.4 402.5,230.6 402.3,233.9 401.2,236.2 401.9,239.4 402.3,242.9 404.4,246.0 401.1,246.4 400.2,247.6 400.6,249.5 400.2,252.2 402.6,252.8 402.6,254.9 401.2,254.9 400.2,253.4 397.8,252.2 394.8,251.6 392.5,250.6 389.4,251.1 388.6,248.1 388.6,244.3 384.6,243.8 383.8,245.5 381.3,245.7 379.6,241.8 373.2,241.8Z"/>
<path fill="#f5f5f5" d="M369.9,238.3 371.5,240.2 372.4,240.2 373.2,239.6 375.7,240.1 377.1,239.0 378.5,236.8 378.9,235.0 381.5,232.4 382.0,228.9 383.1,225.4 379.6,225.4 378.9,227.7 378.5,228.5 375.9,227.7 373.8,227.7 375.0,229.2 375.7,232.4 375.9,234.7 375.0,235.7 372.9,235.0 370.8,235.7 371.5,237.6Z"/>
<path fill="#ddefdd" d="M369.9,238.3 367.5,235.7 366.8,234.1 365.9,232.7 366.8,230.6 367.6,229.8 370.3,229.8 370.3,227.7 373.8,227.7 375.0,229.2 375.7,232.4 375.9,234.7 375.0,235.7 372.9,235.0 370.8,235.7 371.5,237.6Z"/>
<path fill="#f5f5f5" d="M367.6,229.8 367.6,227.5 370.3,227.7 370.3,229.8ZM365.4,225.0 366.1,225.0 365.7,225.9Z"/>
<path fill="#c6e4c6" d="M367.6,227.5 367.5,225.4 367.1,224.7 365.4,223.4 365.6,223.1 366.8,220.5 369.8,219.9 371.1,219.1 372.9,216.3 374.6,212.2 375.4,209.8 375.9,208.6 376.6,210.2 376.9,212.6 377.6,214.0 375.0,214.5 377.1,218.6 375.9,221.0 376.1,222.8 376.8,224.7 378.9,227.7 378.5,228.5 375.9,227.7 373.8,227.7 370.3,227.7Z"/>
<path fill="#f5f5f5" d="M377.1,218.6 379.4,218.0 382.0,217.5 383.8,215.8 386.4,215.2 388.5,213.1 390.6,212.2 392.0,214.0 391.6,215.8 392.5,216.3 394.8,218.7 398.4,222.4 394.8,222.4 391.6,223.3 389.7,224.3 384.6,222.8 382.9,224.0 383.1,225.4 379.6,225.4 378.9,227.7 376.8,224.7 376.1,222.8 375.9,221.0Z"/>
<path fill="#f5f5f5" d="M376.8,191.2 378.3,190.6 392.5,197.4 392.5,204.0 390.8,204.0 390.1,206.7 389.0,207.9 389.5,209.3 390.6,212.2 388.5,213.1 386.4,215.2 383.8,215.8 382.0,217.5 379.4,218.0 377.1,218.6 375.0,214.5 377.6,214.0 376.9,212.6 376.6,210.2 375.9,208.6 374.3,207.5 374.1,206.3 377.3,202.4 377.6,200.0 378.3,195.8 376.8,194.2Z"/>
<path fill="#f5f5f5" d="M371.5,190.4 375.4,191.9 376.8,191.2 376.8,194.2 378.3,195.8 377.6,200.0 377.3,202.4 374.1,206.3 374.3,207.5 372.4,208.6 368.0,208.2 362.8,208.8 360.1,207.2 357.7,207.9 356.8,211.0 355.4,209.8 354.4,209.4 354.2,208.8 352.2,208.2 351.0,206.1 350.9,205.2 352.9,204.7 356.6,204.4 357.9,201.9 358.0,197.9 360.5,197.2 365.6,193.7Z"/>
<path fill="#97ce97" d="M355.2,220.3 355.2,217.5 357.0,214.0 356.8,211.0 357.7,207.9 360.1,207.2 362.8,208.8 368.0,208.2 372.4,208.6 374.3,207.5 375.9,208.6 375.4,209.8 374.6,212.2 372.9,216.3 371.1,219.1 369.8,219.9 366.8,220.5 365.6,223.1 362.8,223.8 361.0,224.0 359.2,221.7 358.2,220.5Z"/>
<path fill="#c6e4c6" d="M353.3,220.7 355.2,220.3 355.2,217.5 357.0,214.0 356.8,211.0 355.4,209.8 354.4,209.4 352.2,212.2 351.9,213.1 353.3,215.8Z"/>
<path fill="#c6e4c6" d="M352.6,220.8 353.3,220.7 353.3,215.8 351.9,213.1 352.1,212.2 350.3,212.1 351.2,214.0 351.6,217.5Z"/>
<path fill="#c6e4c6" d="M345.1,222.6 347.0,223.3 349.6,222.2 352.6,220.8 351.6,217.5 351.2,214.0 350.3,212.1 345.6,212.2 345.6,214.9 346.1,217.2 344.9,219.6Z"/>
<path fill="#ddefdd" d="M340.9,213.3 341.4,210.8 342.8,209.6 343.5,208.1 345.4,207.0 349.3,205.2 350.9,205.2 351.0,206.1 352.2,208.2 354.2,208.8 354.4,209.4 352.2,212.2 352.1,212.2 350.3,212.1 345.6,212.2 345.6,214.9 342.3,214.3Z"/>
<path fill="#c6e4c6" d="M337.4,223.8 340.0,223.1 343.5,222.4 345.1,222.6 344.9,219.6 346.1,217.2 345.6,214.9 342.3,214.3 340.9,213.3 339.6,212.9 336.5,213.7 336.0,215.8 337.0,216.8 335.6,218.2 336.0,220.1 337.4,221.9Z"/>
<path fill="#f5f5f5" d="M330.4,219.4 331.6,220.5 334.8,222.8 337.4,223.8 337.4,221.9 336.0,220.1 335.6,218.2 334.1,218.6 333.4,216.8 332.5,216.6 331.8,218.0Z"/>
<path fill="#f5f5f5" d="M327.2,215.8 327.8,217.5 328.6,218.6 330.4,219.4 331.8,218.0 332.5,216.6 331.9,215.6 330.9,214.0 328.6,214.2Z"/>
<path fill="#ddefdd" d="M324.2,212.2 324.8,212.9 326.5,214.5 327.2,215.8 328.6,214.2 330.9,214.0 331.9,215.6 332.5,216.6 333.4,216.8 334.1,218.6 335.6,218.2 337.0,216.8 336.0,215.8 336.5,213.7 335.3,212.2 334.8,209.8 333.0,210.2 330.4,209.8 328.6,209.8 326.5,209.4 326.5,211.0 324.8,211.4Z"/>
<path fill="#f5f5f5" d="M321.3,210.0 324.2,212.2 324.8,211.4 326.5,211.0 326.5,209.4 323.4,209.4Z"/>
<path fill="#c6e4c6" d="M321.6,203.3 319.9,205.8 321.1,207.7 321.3,210.0 323.4,209.4 326.5,209.4 328.6,209.8 330.4,209.8 330.6,208.9 329.1,205.9 328.1,204.7 327.1,203.5 324.9,202.4 322.3,202.6Z"/>
<path fill="#c6e4c6" d="M321.1,207.7 326.4,207.7 326.4,208.4 321.1,208.6Z"/>
<path fill="#ddefdd" d="M329.1,205.9 330.6,208.9 330.4,209.8 333.0,210.2 334.8,209.8 335.3,212.2 336.5,213.7 339.6,212.9 340.9,213.3 341.4,210.8 342.8,209.6 343.5,208.1 345.4,207.0 349.3,205.2 350.9,205.2 352.9,204.7 356.6,204.4 357.9,201.9 358.0,197.9 356.1,198.1 355.9,197.0 353.6,195.4 341.9,187.8 339.1,187.8 340.0,195.4 340.9,203.0 340.9,204.4 333.9,204.4 331.9,205.1 330.0,204.6 329.9,205.6Z"/>
<path fill="#f5f5f5" d="M372.0,242.2 373.2,241.8 379.6,241.8 381.3,245.7 383.8,245.5 384.6,243.8 388.6,244.3 388.6,248.1 389.4,251.1 392.5,250.6 392.5,254.2 389.0,254.2 389.0,259.9 391.4,262.3 387.9,263.0 382.9,261.9 375.0,261.9 373.2,261.2 371.1,261.8 371.1,259.1 372.4,255.1 374.5,250.2 373.2,247.2 373.6,246.9ZM371.5,240.2 372.4,239.6 373.2,239.6 371.9,241.7Z"/>
<path fill="#c6e4c6" d="M389.0,254.2 392.5,254.2 392.5,250.6 394.8,251.6 397.8,252.2 400.2,253.4 401.2,254.9 402.6,254.9 402.6,252.8 400.2,252.2 400.6,249.5 400.2,247.6 401.1,246.4 404.4,246.0 404.8,246.6 408.1,247.9 408.8,250.4 408.2,253.4 407.7,255.3 408.6,256.0 403.4,257.8 403.7,258.8 401.1,259.3 397.8,262.8 394.8,262.6 391.4,262.3 389.0,259.9Z"/>
<path fill="#c6e4c6" d="M408.1,247.9 410.0,248.1 411.1,251.8 410.7,252.8 411.8,255.1 411.1,256.9 413.1,259.5 412.3,261.4 410.5,259.1 410.9,256.9 408.6,256.0 407.7,255.3 408.2,253.4 408.8,250.4Z"/>
<path fill="#c6e4c6" d="M421.2,249.7 421.6,253.9 421.9,257.2 420.1,260.2 415.1,262.8 411.6,266.1 412.6,270.2 412.4,273.5 408.1,276.3 407.9,278.6 406.5,278.4 406.3,276.6 406.5,274.2 405.3,270.7 407.2,268.8 408.2,266.1 407.7,263.9 408.2,260.7 406.5,260.2 403.7,258.8 403.4,257.8 408.6,256.0 410.9,256.9 410.5,259.1 412.3,261.4 413.1,259.5 411.1,256.9 411.8,255.1 410.7,252.8 411.1,251.8 411.8,251.8 417.0,251.3Z"/>
<path fill="#c6e4c6" d="M394.8,262.6 397.8,262.8 401.1,259.3 403.7,258.8 406.5,260.2 408.2,260.7 407.7,263.9 408.2,266.1 407.2,268.8 405.3,270.7 401.9,270.4 399.5,269.1 399.0,267.4 396.4,265.6Z"/>
<path fill="#c6e4c6" d="M385.5,274.9 385.5,270.0 387.2,270.0 387.2,263.5 391.3,263.0 393.4,262.8 394.8,262.6 396.4,265.6 399.0,267.4 399.5,269.1 401.9,270.4 399.5,271.4 397.6,273.0 395.6,275.2 395.1,276.5 390.8,275.8 389.9,277.4 386.7,278.4Z"/>
<path fill="#c6e4c6" d="M371.1,261.8 373.2,261.2 375.0,261.9 382.9,261.9 387.9,263.0 391.4,262.3 394.8,262.6 393.4,262.8 391.3,263.0 387.2,263.5 387.2,270.0 385.5,270.0 385.5,274.9 385.5,281.2 383.8,282.1 380.9,281.7 379.4,281.6 377.1,278.6 376.8,275.2 375.9,271.6 373.9,268.1 371.5,263.9Z"/>
<path fill="#5aab5a" d="M379.4,281.6 380.9,281.7 383.8,282.1 385.5,281.2 385.5,274.9 386.7,278.4 389.9,277.4 390.8,275.8 395.1,276.5 395.6,275.2 397.6,273.0 399.5,271.4 401.9,270.4 405.3,270.7 406.5,274.2 406.3,276.6 404.4,277.7 404.8,279.1 406.5,278.4 407.9,278.6 407.4,281.4 404.8,283.8 403.0,286.3 399.9,288.9 396.9,290.6 395.5,291.0 391.6,291.2 385.5,292.4 382.9,291.4 382.0,288.7 382.5,286.6 380.8,284.5Z"/>
<path fill="#f5f5f5" d="M397.8,283.3 400.4,281.7 401.9,283.1 400.0,285.1Z"/>
<path fill="#c6e4c6" d="M406.3,276.6 406.5,278.4 404.8,279.1 404.4,277.7Z"/>
<path fill="#ddefdd" d="M436.8,252.5 438.5,258.3 437.3,261.2 435.9,266.5 433.6,273.5 432.9,275.1 429.8,276.3 427.5,274.4 426.3,270.5 428.0,266.9 427.5,262.1 428.4,259.9 431.5,259.0 434.5,255.3Z"/>
<path fill="#f5f5f5" d="M426.1,251.4 426.6,252.3 426.1,252.3ZM428.0,252.7 428.6,253.0 428.0,253.0Z"/>
<path fill="#c6e4c6" d="M450.8,266.5 451.6,266.9 451.1,267.4ZM447.3,268.1 448.1,268.4 447.6,268.9Z"/>
<path fill="#f5f5f5" d="M308.5,203.5 309.4,205.2 308.0,205.4ZM306.2,201.6 306.9,201.8 306.6,202.1ZM310.2,203.2 310.8,203.3 310.4,203.7Z"/>
<path fill="#f5f5f5" d="M361.9,230.8 362.4,231.2 361.9,231.5Z"/>
<path fill="#5aab5a" d="M404.4,109.4 408.2,110.0 413.5,110.6 420.5,112.9 422.6,114.6 420.5,115.6 411.8,115.3 407.4,114.1 409.1,114.8 411.4,117.8 411.4,118.8 416.1,119.7 417.0,118.1 414.4,117.8 421.4,118.6 420.5,116.4 424.0,115.3 427.5,115.6 427.9,112.5 426.3,111.5 431.0,112.1 431.9,114.4 435.4,113.0 443.2,111.6 445.9,112.1 451.1,111.5 456.4,110.8 456.4,109.4 463.4,110.2 466.0,110.8 470.4,112.0 467.8,109.9 467.4,108.1 467.8,106.4 471.2,104.1 476.5,104.1 477.9,107.2 477.4,111.6 479.6,114.6 474.8,115.1 477.4,115.6 480.9,113.4 480.9,112.0 481.8,106.4 484.4,105.5 487.0,105.0 491.4,105.5 490.5,108.1 494.9,108.1 495.8,106.4 491.4,102.9 501.9,102.0 502.8,100.2 511.5,98.8 522.0,98.0 533.0,95.5 537.8,97.1 546.5,97.6 549.1,99.4 542.1,102.0 536.0,103.4 543.0,102.3 549.1,102.9 558.8,103.8 566.6,103.4 571.9,104.6 574.5,103.2 577.1,107.2 579.8,107.6 583.2,106.4 588.5,106.4 593.8,104.6 596.4,104.1 606.0,105.0 613.0,106.4 617.4,107.6 625.2,107.2 630.5,109.0 634.0,109.7 642.8,109.5 648.9,108.8 648.0,110.8 649.8,109.0 658.5,109.4 665.5,110.8 665.5,117.8 662.9,118.6 661.1,118.3 664.1,122.5 656.8,123.4 651.5,125.1 648.5,126.5 641.0,126.1 636.6,126.9 636.3,130.0 634.0,130.4 636.1,133.1 634.0,135.6 630.5,138.4 627.9,138.9 627.3,140.7 624.7,142.4 622.6,140.5 623.5,137.9 623.2,133.5 624.9,130.7 628.8,129.1 633.1,126.5 636.6,123.9 637.5,122.1 631.4,123.5 630.5,125.5 624.4,123.7 621.8,127.7 614.4,127.4 611.2,127.0 605.1,127.5 599.9,127.7 595.5,130.5 591.1,133.5 587.1,135.8 590.2,137.0 592.0,137.4 597.8,138.4 596.4,141.4 596.4,144.0 596.0,146.8 592.9,149.6 589.4,152.8 587.3,155.4 583.4,156.8 581.5,155.9 579.2,157.5 579.0,157.3 580.1,155.4 579.8,153.1 583.4,152.6 585.9,148.4 586.2,147.0 583.2,147.7 579.6,148.0 578.9,145.9 573.6,144.4 571.0,139.3 566.6,137.9 562.2,138.2 560.5,139.3 561.7,140.5 559.1,144.0 556.6,144.9 554.7,144.4 550.9,143.6 546.5,145.1 540.4,145.2 537.8,144.0 530.8,143.5 529.5,142.9 529.0,141.6 523.6,140.3 522.0,143.1 520.8,144.4 516.8,144.0 511.5,142.6 507.1,144.2 504.1,145.4 503.3,145.4 499.6,144.7 495.8,142.2 490.5,142.6 486.1,138.4 484.4,136.6 479.1,137.0 475.1,136.6 474.6,134.7 469.9,135.2 465.1,135.9 457.2,137.2 457.2,140.5 458.1,142.6 453.1,142.2 447.6,142.9 442.4,141.4 439.4,141.0 435.7,142.9 432.6,145.2 432.1,146.8 433.6,147.9 435.6,149.9 436.2,150.5 434.5,151.5 432.8,153.6 433.6,156.2 435.4,158.4 431.9,158.4 428.4,156.8 424.9,155.9 420.5,155.6 417.0,153.6 415.8,152.8 414.7,152.2 416.5,149.9 417.4,149.1 420.1,147.9 420.7,144.7 417.0,144.2 412.6,143.3 410.0,140.0 406.1,140.3 405.3,138.8 407.7,138.1 404.4,135.6 404.6,134.2 399.9,133.1 398.4,130.9 398.4,128.6 399.5,127.4 403.4,126.7 400.4,125.6 399.1,125.6 401.2,124.4 405.6,121.4 403.9,119.1 402.5,118.1 403.0,116.5 401.4,114.4 403.0,113.0 400.4,112.1 401.1,110.8Z"/>
<path fill="#5aab5a" stroke-width="1.8" d="M385.1,136.3 385.5,135.4 387.8,134.9 390.4,135.4 390.4,136.3ZM440.6,106.0 443.2,107.4 451.1,108.0 447.6,105.5 448.1,103.2 445.0,103.2ZM446.8,102.9 448.5,101.7 455.5,99.4 464.2,97.6 470.5,96.9 466.0,98.8 457.2,100.2 452.0,102.3 449.4,103.0ZM518.5,93.2 522.0,91.5 516.8,89.4 526.4,91.5 533.4,93.6 527.2,95.0 524.6,94.7ZM591.1,99.7 600.8,98.8 613.9,99.9 609.5,100.8 595.5,100.6ZM595.5,103.0 601.6,102.9 599.0,103.4ZM599.0,136.5 600.8,138.8 601.6,143.1 603.7,145.8 600.8,147.5 601.3,149.6 601.6,151.0 599.2,151.2 599.0,148.4 599.3,145.8 598.7,141.4 598.5,138.2ZM435.4,110.0 437.6,110.4 436.2,111.1ZM636.6,128.2 638.4,128.6 637.2,129.1ZM35.5,110.9 40.8,112.1 47.8,114.2 53.0,115.6 52.1,116.9 48.6,118.6 43.4,118.5 40.8,116.9 37.2,116.0 35.5,117.8Z"/>
<path fill="#c6e4c6" d="M436.2,150.5 435.6,149.9 433.6,147.9 432.1,146.8 432.6,145.2 435.7,142.9 439.4,141.0 442.4,141.4 447.6,142.9 453.1,142.2 458.1,142.6 457.2,140.5 457.2,137.2 465.1,135.9 469.9,135.2 474.6,134.7 475.1,136.6 479.1,137.0 484.4,136.6 486.1,138.4 490.5,142.6 495.8,142.2 499.6,144.7 503.3,145.4 501.0,146.6 500.5,148.7 495.8,148.9 494.5,151.9 490.5,152.8 490.9,156.6 490.9,157.6 488.8,156.6 483.5,156.4 480.0,155.9 479.1,157.1 474.8,157.1 474.6,157.5 471.2,159.1 469.5,159.8 466.9,159.6 466.0,156.4 459.0,155.4 457.2,153.8 452.9,151.9 448.5,152.8 448.5,159.2 445.0,157.5 442.4,158.4 442.4,156.6 439.8,153.6 438.5,153.6 440.3,152.4 443.2,152.2 443.2,149.4 440.1,149.2Z"/>
<path fill="#c6e4c6" d="M448.5,159.2 448.5,152.8 452.9,151.9 457.2,153.8 459.0,155.4 466.0,156.4 466.9,159.6 469.5,159.8 471.2,159.1 474.6,157.5 474.8,157.1 478.2,160.1 476.0,161.1 473.9,159.9 471.8,160.1 470.7,161.3 469.1,162.2 470.2,164.6 469.1,166.4 466.9,166.1 463.2,163.4 459.7,161.5 458.8,159.6 455.5,157.6 453.1,156.8 450.2,159.2Z"/>
<path fill="#f5f5f5" d="M442.4,158.4 445.0,157.5 448.5,159.2 450.2,159.2 453.1,156.8 455.5,157.6 458.8,159.6 459.7,161.5 463.2,163.4 466.9,166.1 463.9,166.6 460.8,168.9 457.6,169.2 457.6,167.4 454.3,165.9 450.8,164.6 448.5,164.8 446.4,166.1 444.8,166.2 444.6,163.2 443.2,161.5 443.1,159.8Z"/>
<path fill="#c6e4c6" d="M474.8,157.1 479.1,157.1 480.0,155.9 483.5,156.4 488.8,156.6 490.9,157.6 487.0,159.8 484.9,159.9 481.8,160.8 479.6,161.9 479.3,162.6 476.1,162.6 472.1,162.2 471.8,161.1 473.9,161.1 476.0,161.1 478.2,160.1Z"/>
<path fill="#f5f5f5" d="M469.1,162.2 470.7,161.3 471.8,160.1 473.9,159.9 473.9,161.1 471.8,161.1 472.1,162.2 476.1,162.6 479.3,162.6 479.6,163.9 481.8,164.1 481.6,166.4 478.8,166.1 476.1,167.3 475.6,167.3 473.4,165.5 472.1,165.9 469.1,166.4 470.2,164.6Z"/>
<path fill="#f5f5f5" d="M457.6,169.2 460.8,168.9 463.9,166.6 466.9,166.1 469.1,166.4 472.1,165.9 473.4,165.5 475.6,167.3 476.1,167.3 478.8,166.1 481.6,166.4 480.0,167.1 475.8,167.8 475.1,170.9 473.0,173.4 471.8,175.7 469.5,176.2 466.7,177.4 466.5,179.2 462.5,180.1 459.9,180.1 457.1,179.3 458.5,176.6 456.9,175.5 456.4,172.0 457.4,169.7Z"/>
<path fill="#5aab5a" d="M458.3,187.4 458.8,185.5 461.1,183.9 460.4,182.0 457.1,179.3 459.9,180.1 462.5,180.1 466.5,179.2 466.7,177.4 469.5,176.2 471.8,175.7 473.0,173.4 475.1,170.9 475.8,167.8 480.0,167.1 481.6,166.4 483.3,167.4 486.6,169.4 485.1,170.8 480.9,170.6 480.0,173.8 482.3,175.0 480.7,177.2 478.2,180.8 474.8,182.7 473.0,184.2 473.4,186.3 474.8,188.8 470.9,189.0 469.9,190.0 468.5,189.5 467.2,187.9 463.4,187.4Z"/>
<path fill="#5aab5a" d="M469.9,190.0 470.9,189.0 474.8,188.8 473.4,186.3 473.0,184.2 474.8,182.7 478.2,180.8 480.7,177.2 482.3,175.0 480.0,173.8 480.9,170.6 485.1,170.8 486.6,169.4 488.6,171.5 488.8,173.8 488.2,176.4 492.2,178.7 490.7,181.1 496.3,183.6 499.2,184.9 504.7,185.3 504.7,182.7 505.9,182.5 506.1,183.7 506.2,184.6 511.5,184.4 511.7,182.8 515.0,180.8 518.5,180.1 520.8,182.2 520.2,183.0 517.1,186.0 516.0,187.4 515.4,189.5 513.8,189.5 513.2,192.7 512.5,194.2 512.0,193.9 512.0,191.2 510.1,190.0 512.2,187.9 508.0,187.4 507.6,186.0 505.2,185.3 504.7,188.4 505.7,189.2 506.2,193.0 504.5,193.5 502.8,194.8 501.9,196.2 499.2,197.6 497.5,199.5 494.5,202.3 491.0,203.8 490.9,207.9 490.1,212.2 490.1,213.5 488.8,215.2 487.4,215.9 486.1,217.3 484.4,215.8 483.1,211.4 481.4,208.8 480.0,205.2 478.2,200.9 477.9,198.2 477.7,194.8 477.5,192.7 474.8,195.1 473.0,194.8 471.2,192.7 473.5,191.4Z"/>
<path fill="#c6e4c6" d="M490.3,214.3 491.9,215.2 493.6,218.4 492.6,220.7 490.9,221.0 490.0,217.5Z"/>
<path fill="#c6e4c6" d="M490.7,181.1 492.2,178.7 494.0,178.5 497.5,180.9 501.0,182.5 504.7,182.7 504.7,185.3 499.2,184.9 496.3,183.6Z"/>
<path fill="#f5f5f5" d="M506.1,183.7 506.2,184.6 511.5,184.4 511.7,182.8 508.9,182.2Z"/>
<path fill="#97ce97" d="M506.2,193.0 505.7,189.2 504.7,188.4 505.2,185.3 507.6,186.0 508.0,187.4 512.2,187.9 510.1,190.0 512.0,191.2 512.0,193.9 512.0,195.3 511.1,192.5 508.9,192.1Z"/>
<path fill="#f5f5f5" d="M512.0,195.3 512.0,193.9 512.5,194.2 513.2,192.7 513.8,189.5 515.4,189.5 516.0,187.4 517.1,186.0 520.2,183.0 520.8,182.2 522.5,183.2 523.2,186.0 521.3,188.1 521.3,189.7 523.6,190.9 524.6,191.4 524.1,192.8 525.7,193.9 527.4,193.3 525.7,195.8 523.8,196.5 522.4,197.0 521.0,199.1 523.0,203.3 522.4,204.9 523.9,207.3 524.1,210.5 522.9,214.0 522.9,210.5 522.2,207.7 521.3,203.5 520.6,201.9 517.5,204.0 515.5,203.5 515.9,201.2 515.5,199.5 514.1,197.6Z"/>
<path fill="#97ce97" d="M522.9,214.0 524.1,210.5 523.9,207.3 522.4,204.9 523.0,203.3 521.0,199.1 522.4,197.0 523.8,196.5 525.7,195.8 526.4,197.4 527.6,197.4 527.2,200.3 529.2,199.7 530.8,199.3 532.5,199.5 533.9,201.1 533.9,202.8 535.1,204.2 534.6,206.5 530.8,206.5 529.9,207.7 529.5,208.1 530.6,211.0 529.0,209.6 527.2,209.3 527.1,207.9 525.5,208.2 525.3,210.8 524.1,214.0 524.1,215.4 525.5,216.6 526.4,218.9 528.1,219.6 529.2,220.7 527.4,221.5 525.7,220.1 525.0,219.4 522.5,217.2 522.5,215.8Z"/>
<path fill="#ddefdd" d="M525.7,195.8 527.4,193.3 528.5,192.1 529.4,192.3 530.6,193.5 532.5,195.1 533.9,196.7 532.5,197.7 534.6,198.9 537.0,201.8 538.5,203.5 538.6,205.2 538.8,205.8 536.0,206.3 534.6,206.5 535.1,204.2 533.9,202.8 533.9,201.1 532.5,199.5 530.8,199.3 529.2,199.7 527.2,200.3 527.6,197.4 526.4,197.4Z"/>
<path fill="#97ce97" d="M539.5,193.9 537.2,195.1 535.5,198.2 536.9,200.3 538.6,202.4 541.1,204.9 541.8,207.9 541.8,210.5 539.5,212.8 537.8,213.3 537.2,214.9 534.6,216.4 533.9,214.3 533.2,213.3 535.8,212.2 536.4,210.8 538.6,209.8 538.8,205.8 538.6,205.2 538.5,203.5 537.0,201.8 534.6,198.9 532.5,197.7 533.9,196.7 532.5,195.1 530.6,193.5 529.4,192.3 531.6,191.8 534.8,190.7 537.2,191.6Z"/>
<path fill="#ddefdd" d="M530.6,211.0 529.5,208.1 529.9,207.7 530.8,206.5 534.6,206.5 536.0,206.3 538.8,205.8 538.6,209.8 536.4,210.8 535.8,212.2 533.2,213.3 531.6,212.9Z"/>
<path fill="#5aab5a" d="M525.7,220.1 527.4,221.5 529.2,220.7 531.5,223.1 531.5,226.6 533.0,229.1 531.6,229.2 527.8,226.4 526.5,224.2 526.0,221.9ZM542.3,228.0 545.1,227.1 548.2,225.9 550.0,223.6 551.9,222.8 554.7,219.4 555.2,219.2 556.5,221.0 559.1,222.2 557.0,224.0 556.1,224.2 553.1,224.0 552.6,226.2 551.4,228.0 551.0,229.1 547.4,228.9 544.8,229.8 543.0,229.2Z"/>
<path fill="#c6e4c6" d="M550.2,223.4 551.9,222.8 551.8,224.0Z"/>
<path fill="#97ce97" stroke-width="1.5" d="M517.3,221.7 521.1,222.4 523.2,224.8 526.0,226.8 528.6,228.5 531.5,230.6 532.1,233.2 533.9,235.0 536.0,236.8 535.6,241.7 533.4,241.7 529.5,238.5 527.2,235.9 526.0,233.1 523.8,229.8 521.5,227.1 518.5,224.5ZM534.6,243.4 536.4,241.8 540.4,242.9 544.4,242.7 547.7,243.8 550.9,245.0 550.7,246.7 545.6,246.0 540.4,245.2 536.9,244.4ZM541.2,228.9 542.3,228.0 543.0,229.2 544.8,229.8 547.4,228.9 551.0,229.1 551.4,228.0 552.6,226.2 553.1,224.0 556.1,224.2 557.0,227.1 558.4,229.8 556.1,231.5 556.1,233.2 554.4,235.9 553.5,238.5 550.9,238.5 549.1,237.3 546.1,237.6 543.4,236.6 543.0,234.1 541.2,232.0ZM560.5,229.2 563.1,229.8 565.8,229.9 569.2,228.7 568.4,230.8 565.8,230.8 562.2,230.6 560.5,231.5 560.9,233.1 563.1,233.1 566.3,232.9 564.0,234.5 563.1,235.0 564.5,237.3 565.8,239.4 564.9,240.8 563.1,239.6 562.2,236.8 561.0,236.8 561.2,241.1 559.6,241.1 559.6,237.6 558.4,236.4 559.6,233.2 560.1,231.5ZM579.6,233.8 582.4,232.2 585.0,232.9 585.3,235.9 586.8,237.3 589.4,235.3 592.0,234.3 597.2,236.1 597.2,247.4 593.8,245.5 592.0,246.2 592.9,243.8 592.0,241.1 588.5,239.4 584.1,238.2 582.9,238.5 581.5,236.4 584.1,235.7 581.5,235.0 579.8,234.1ZM566.6,249.5 569.2,247.2 569.6,247.9 568.4,249.3ZM551.8,245.8 554.4,246.0 558.8,246.2 565.4,246.0 565.4,246.9 560.5,246.9 555.2,247.2 552.1,246.9ZM558.8,248.1 561.9,249.0 560.5,249.3ZM573.6,228.0 574.5,230.6 574.5,232.9 575.7,231.0 575.7,229.1 574.5,229.2ZM574.5,236.8 579.4,237.3 577.1,237.6ZM571.0,237.1 573.1,237.3 572.2,238.2ZM585.3,241.3 586.4,242.5 585.3,243.6ZM579.8,244.6 581.0,244.1 580.8,245.5ZM520.2,229.1 522.0,230.4 521.1,229.9ZM523.0,233.2 524.3,234.7 523.6,234.3ZM534.8,234.5 537.2,236.1 536.0,236.4ZM538.8,236.1 540.0,236.8 539.1,237.1Z"/>
<path fill="#f5f5f5" d="M569.2,247.2 573.3,246.2 571.9,247.6 569.6,247.9Z"/>
<path fill="#c6e4c6" stroke-width="1.6" d="M561.5,199.1 564.4,199.3 564.7,201.8 563.3,203.7 563.5,206.5 567.5,207.3 567.7,209.4 565.8,207.5 562.2,207.5 561.5,206.1 560.5,203.5 561.2,200.9ZM564.0,219.2 566.6,216.4 570.1,214.3 571.9,217.5 571.4,220.5 570.1,221.7 567.5,220.1 566.6,218.4ZM568.0,209.6 570.3,211.7 569.2,214.0 568.2,212.6ZM564.0,210.8 566.1,211.4 566.6,214.0 565.8,215.8 564.7,214.3 564.0,213.1ZM555.6,216.8 559.6,213.1 559.8,211.7 557.9,214.9ZM561.2,208.1 563.1,208.4 562.6,210.2Z"/>
<path fill="#5aab5a" d="M563.3,187.2 564.0,188.6 562.1,193.0 560.7,191.2 561.7,188.6Z"/>
<path fill="#5aab5a" stroke-width="1.6" d="M595.2,156.9 596.0,155.7 598.0,155.7 598.5,152.1 600.8,153.6 604.8,154.0 605.1,155.7 602.5,156.4 601.1,158.0 598.1,156.9 596.4,158.0 597.1,158.5 595.5,158.9ZM598.0,159.1 598.1,160.6 599.0,162.4 597.2,164.5 597.1,166.8 596.7,168.5 596.9,169.0 595.2,170.2 595.0,169.4 593.2,170.8 590.2,170.9 589.9,171.5 588.2,172.9 586.8,170.9 585.0,170.9 582.4,171.5 579.8,172.0 579.6,171.5 580.6,170.8 582.4,169.6 585.0,169.4 587.6,169.2 588.5,168.5 589.7,167.1 590.6,165.9 591.1,166.8 592.9,166.1 594.5,164.6 595.5,161.9 595.5,160.4 596.0,159.4 597.2,159.9ZM582.4,172.7 585.3,171.5 586.2,172.4 585.3,173.2 583.2,174.3 582.4,173.8ZM579.6,172.2 581.0,172.9 581.2,174.6 580.3,176.6 579.2,177.2 578.3,176.4 578.5,174.6 577.5,173.8 577.8,172.9ZM592.3,164.6 593.0,165.0 592.5,165.4Z"/>
<path fill="#f5f5f5" d="M568.0,161.7 571.0,159.8 572.6,158.4 574.8,159.1 575.0,158.0 577.5,157.3 579.0,157.3 579.2,157.5 577.5,158.9 577.5,159.9 574.5,161.9 573.6,162.7 575.2,163.9 572.8,164.5 571.2,165.5 569.2,165.5 568.7,164.8 569.6,163.8 569.8,162.4Z"/>
<path fill="#5aab5a" d="M571.2,165.5 572.8,164.5 575.2,163.9 577.0,166.8 577.1,168.9 576.4,170.1 574.0,170.8 571.9,171.5 571.5,170.2 571.9,168.5 571.5,167.1 572.2,166.8ZM571.4,172.9 572.6,172.9 571.9,173.4Z"/>
<path fill="#c6e4c6" d="M504.1,145.4 507.1,144.2 511.5,142.6 516.8,144.0 520.8,144.4 522.0,143.1 523.6,140.3 529.0,141.6 529.5,142.9 530.8,143.5 537.8,144.0 540.4,145.2 546.5,145.1 550.9,143.6 554.7,144.4 552.6,147.3 553.5,147.7 556.0,148.0 557.9,147.7 560.1,149.8 556.0,150.3 551.8,152.1 549.3,153.1 546.3,152.6 546.1,155.0 543.7,156.6 538.6,157.3 534.2,158.7 528.6,157.1 520.2,156.6 519.2,156.8 517.3,154.1 514.1,152.8 509.6,152.2 508.5,148.0 505.9,147.3Z"/>
<path fill="#1b5a1b" d="M568.0,161.7 563.3,163.2 562.4,163.8 564.0,160.6 562.2,159.9 559.6,161.7 557.0,162.9 556.5,163.9 558.6,166.1 558.8,166.4 561.7,165.4 564.9,166.1 562.2,167.4 561.0,168.5 559.3,170.2 561.0,171.5 562.1,174.1 563.8,176.0 563.8,177.4 562.1,178.5 564.0,179.2 563.1,182.0 561.4,183.9 559.8,186.5 558.2,188.4 555.8,190.2 553.5,191.4 550.5,192.5 548.2,193.0 546.1,193.7 543.9,194.4 543.4,196.0 542.6,195.8 542.5,193.9 539.5,193.9 537.2,191.6 534.8,190.7 531.6,191.8 529.4,192.3 528.5,192.1 527.4,193.3 525.7,193.9 524.1,192.8 524.6,191.4 523.6,190.9 521.3,189.7 521.3,188.1 523.2,186.0 522.5,183.2 520.8,182.2 518.5,180.1 515.0,180.8 511.7,182.8 508.9,182.2 506.1,183.7 505.9,182.5 504.7,182.7 501.0,182.5 497.5,180.9 494.0,178.5 492.2,178.7 488.2,176.4 488.8,173.8 488.6,171.5 486.6,169.4 483.3,167.4 481.6,166.4 481.8,164.1 479.6,163.9 479.3,162.6 479.6,161.9 481.8,160.8 484.9,159.9 487.0,159.8 490.9,157.6 490.9,156.6 490.5,152.8 494.5,151.9 495.8,148.9 500.5,148.7 501.0,146.6 503.3,145.4 504.1,145.4 505.9,147.3 508.5,148.0 509.6,152.2 514.1,152.8 517.3,154.1 519.2,156.8 520.2,156.6 528.6,157.1 534.2,158.7 538.6,157.3 543.7,156.6 546.1,155.0 546.3,152.6 549.3,153.1 551.8,152.1 556.0,150.3 560.1,149.8 557.9,147.7 556.0,148.0 553.5,147.7 552.6,147.3 554.7,144.4 556.6,144.9 559.1,144.0 561.7,140.5 560.5,139.3 562.2,138.2 566.6,137.9 571.0,139.3 573.6,144.4 578.9,145.9 579.6,148.0 583.2,147.7 586.2,147.0 585.9,148.4 583.4,152.6 579.8,153.1 580.1,155.4 579.0,157.3 577.5,157.3 575.0,158.0 574.8,159.1 572.6,158.4 571.0,159.8ZM540.7,197.9 543.0,196.3 544.8,197.0 543.9,198.9 542.1,199.7 540.7,199.1Z"/>
<path fill="#c6e4c6" d="M420.5,155.6 424.9,155.9 428.4,156.8 431.9,158.4 431.4,159.6 429.2,159.4 426.6,159.6 423.1,158.9 423.1,157.1Z"/>
<path fill="#c6e4c6" d="M426.6,159.6 429.2,159.4 431.9,162.4 431.0,163.4 428.9,162.0 427.0,161.1Z"/>
<path fill="#c6e4c6" d="M429.2,159.4 431.4,159.6 431.9,158.4 435.4,158.4 437.1,160.4 436.6,162.7 436.1,164.3 434.5,162.0 431.9,163.4 431.0,163.4 431.9,162.4ZM428.9,162.0 431.0,163.4 429.9,163.2Z"/>
<path fill="#5aab5a" d="M411.8,180.1 413.7,180.4 416.1,179.0 417.0,178.1 415.2,176.4 418.8,175.3 421.2,175.7 424.0,177.1 428.7,180.4 431.9,180.6 433.6,180.8 434.0,181.6 435.2,181.6 435.9,183.0 438.4,184.9 438.2,186.9 439.4,188.1 440.1,188.4 440.8,189.2 441.5,191.2 447.1,191.8 448.0,193.0 446.8,196.5 441.5,198.2 436.2,198.9 434.5,199.7 431.7,201.4 427.5,201.1 426.4,200.7 425.4,202.8 424.9,200.9 422.2,197.2 419.1,193.9 417.9,190.2 415.6,187.8 413.5,184.2 411.8,182.3Z"/>
<path fill="#c6e4c6" d="M425.4,202.8 426.4,200.7 427.5,201.1 431.7,201.4 434.5,199.7 436.2,198.9 441.5,198.2 443.4,202.3 441.9,204.2 436.2,207.0 429.2,209.1 426.6,209.4 426.1,208.2 425.4,205.2Z"/>
<path fill="#c6e4c6" d="M443.4,202.3 441.5,198.2 446.8,196.5 448.0,193.0 447.1,191.8 448.5,189.5 449.2,187.9 450.2,189.5 453.2,190.2 455.1,192.1 452.9,195.8 451.6,198.2 449.4,200.0 446.8,201.8ZM448.7,185.8 449.4,185.5 449.0,186.5Z"/>
<path fill="#97ce97" d="M440.8,189.2 441.5,191.2 447.1,191.8 448.5,189.5 449.2,187.9 449.0,186.5 448.7,185.8 447.3,187.2 445.0,189.2 442.6,189.2Z"/>
<path fill="#97ce97" d="M439.4,188.1 439.4,186.7 440.3,185.8 440.8,187.2 440.1,188.4Z"/>
<path fill="#c6e4c6" d="M431.9,180.6 433.6,180.8 434.0,181.6 435.2,181.6 434.5,179.9 434.3,179.0Z"/>
<path fill="#97ce97" d="M418.4,173.1 418.8,175.3 421.2,175.7 424.0,177.1 428.7,180.4 431.9,180.6 434.3,179.0 435.4,179.2 434.5,178.1 434.0,177.2 433.4,174.8 431.0,173.8 429.9,172.0 431.4,169.9 429.9,168.5 428.9,166.4 424.7,166.6 422.8,167.6 422.2,171.3Z"/>
<path fill="#ddefdd" d="M413.3,169.6 413.9,168.5 414.7,167.1 417.0,167.1 420.5,167.1 424.7,166.6 422.8,167.6 422.2,171.3 418.4,173.1 414.9,175.0 413.0,174.3 413.1,173.2 414.6,171.6 413.5,170.9Z"/>
<path fill="#c6e4c6" d="M411.9,173.6 413.1,173.2 414.6,171.6 413.5,170.9Z"/>
<path fill="#97ce97" d="M410.4,176.7 411.6,179.9 412.4,176.9 412.8,174.8 413.0,174.3 413.1,173.2 411.9,173.6 411.2,175.5Z"/>
<path fill="#c6e4c6" d="M411.6,179.9 411.8,180.1 413.7,180.4 416.1,179.0 417.0,178.1 415.2,176.4 418.8,175.3 418.4,173.1 414.9,175.0 413.0,174.3 412.8,174.8 412.4,176.9Z"/>
<path fill="#5aab5a" d="M428.9,162.0 431.0,163.4 431.9,163.4 434.5,162.0 436.1,164.3 438.0,166.1 441.5,167.3 444.8,166.9 444.8,166.2 446.4,166.1 448.5,164.8 450.8,164.6 454.3,165.9 457.6,167.4 457.6,169.2 457.4,169.7 456.4,172.0 456.9,175.5 458.5,176.6 457.1,179.3 460.4,182.0 461.1,183.9 458.8,185.5 458.3,187.4 453.8,187.1 450.8,186.3 449.4,184.1 446.2,185.1 442.4,183.2 440.6,182.7 439.4,180.9 438.0,178.7 436.2,178.3 435.4,179.2 434.5,178.1 434.0,177.2 433.4,174.8 431.0,173.8 429.9,172.0 431.4,169.9 429.9,168.5 428.9,166.4 428.0,165.0 427.5,162.6Z"/>
<path fill="#276b27" d="M550.2,269.6 554.7,267.4 558.8,266.5 563.1,264.8 564.4,263.0 565.6,260.4 568.4,258.6 570.1,256.5 572.8,255.8 574.8,257.6 577.1,257.6 578.0,254.2 579.4,253.2 582.4,251.6 582.4,250.9 586.8,252.8 589.9,252.8 588.5,255.1 587.6,257.8 591.1,259.5 594.6,262.1 596.9,262.1 598.1,257.8 598.5,253.9 599.9,250.2 601.6,253.4 602.2,256.9 604.8,257.8 605.1,260.4 606.3,263.9 609.2,266.0 612.1,269.1 614.4,271.8 617.9,275.2 618.6,277.9 619.3,281.4 618.2,285.8 616.5,288.9 615.1,291.0 613.3,294.5 613.0,297.1 609.5,298.0 606.7,299.9 603.9,298.4 601.6,299.4 597.2,298.4 595.0,296.2 593.8,294.0 592.2,293.8 592.9,292.4 591.7,289.2 591.8,288.6 589.9,291.0 588.5,292.6 587.6,292.2 585.3,289.2 584.1,287.9 580.1,286.6 576.2,287.0 571.0,288.0 567.5,289.2 566.6,290.8 563.8,290.8 560.5,291.0 556.8,292.9 553.5,292.6 551.8,291.5 553.0,289.8 553.0,287.5 551.8,284.0 550.4,280.5 549.0,277.0 549.1,275.2 549.0,273.5 549.6,270.9ZM603.7,302.7 606.9,303.4 610.0,303.1 610.0,305.0 609.3,307.1 607.4,307.8 605.1,306.6 604.6,305.0ZM589.5,294.0 592.0,294.1 590.8,294.5ZM578.5,251.4 580.3,251.3 579.4,252.2ZM589.4,255.7 590.2,256.2 589.4,256.4Z"/>
<path fill="#5aab5a" stroke-width="1.6" d="M652.7,291.7 655.5,293.3 656.4,295.9 658.2,295.6 658.5,297.3 662.0,297.3 662.9,297.5 661.8,300.1 660.2,300.6 660.1,302.4 657.3,304.3 656.2,303.8 657.1,301.9 656.2,301.1 654.7,300.3 656.0,298.9 656.4,297.1 655.3,295.0 653.2,293.1ZM652.7,302.4 655.5,304.5 653.2,306.8 652.7,307.8 653.4,308.1 650.3,309.0 649.4,311.8 647.1,313.1 645.0,313.1 641.9,312.0 642.8,310.2 645.4,308.5 648.9,306.8 650.6,304.6 651.7,303.1ZM643.6,313.4 644.8,313.6 644.2,314.1Z"/>
<path fill="#f5f5f5" d="M597.2,236.1 600.8,237.4 604.2,239.0 606.0,241.1 608.6,242.0 607.8,243.4 610.4,247.2 613.9,249.5 611.2,249.5 607.8,248.1 606.0,245.5 603.4,244.8 601.6,246.4 599.9,247.6 597.2,247.4ZM610.4,241.1 613.9,241.1 616.5,238.8 617.0,240.2 613.9,242.5 611.2,242.3ZM614.4,236.1 617.4,238.2 618.2,239.7 616.5,237.6ZM621.2,241.1 623.2,243.4 622.1,243.1ZM607.0,235.0 608.5,235.0 607.8,235.5Z"/>
<path fill="#f5f5f5" d="M624.4,243.4 626.1,244.4 624.9,244.4ZM627.9,244.8 630.2,246.4 628.8,246.0ZM630.0,247.8 631.9,248.8 630.5,248.8ZM631.9,246.2 633.1,248.3 632.2,247.8ZM633.1,249.5 634.5,250.4 633.5,250.4Z"/>
<path fill="#f5f5f5" d="M642.0,257.8 643.1,258.6 642.4,259.0ZM643.1,259.5 644.2,260.4 643.5,260.6ZM644.8,262.3 645.5,262.6 645.0,262.8ZM646.6,265.4 647.1,265.8 646.8,266.0Z"/>
<path fill="#c6e4c6" d="M637.5,266.9 640.1,268.2 642.8,270.5 640.1,269.6ZM643.1,267.9 643.8,268.6 643.3,268.6Z"/>
<path fill="#c6e4c6" d="M660.8,262.1 663.0,262.3 663.0,263.4 661.1,263.4ZM663.4,260.4 665.5,259.9 664.6,261.1Z"/>
<path fill="#f5f5f5" d="M652.9,228.7 653.6,229.1 653.2,229.4ZM655.5,232.2 656.4,232.7 655.7,232.9ZM627.0,219.2 627.7,219.4 627.3,219.8ZM615.8,218.4 616.5,218.6 616.2,218.9ZM585.7,218.2 586.2,218.6 585.9,218.9ZM603.5,207.9 604.2,207.9 603.9,208.4ZM605.3,204.9 605.8,205.1 605.5,205.4ZM649.8,218.9 650.5,219.1 650.1,219.4ZM642.4,232.2 642.9,232.4 642.6,232.7ZM48.1,254.9 49.2,255.3 48.4,255.7ZM49.7,255.7 50.6,256.0 49.8,256.2ZM43.6,268.2 44.2,268.6 43.7,268.8ZM88.5,262.1 89.6,262.5 88.9,262.8ZM105.0,246.9 105.7,247.1 105.3,247.4Z"/>
<path fill="#f5f5f5" d="M236.9,174.8 237.5,174.8 237.3,175.1ZM242.9,202.8 243.6,203.2 242.9,203.7ZM243.4,205.6 244.1,205.9 243.8,206.3ZM243.6,207.0 244.1,207.3 243.8,207.5ZM246.0,208.2 246.6,208.6 246.2,208.8ZM243.1,204.2 243.4,204.7 243.1,204.9ZM242.4,210.2 242.7,210.5 242.4,210.5ZM242.0,201.4 242.5,201.6 242.2,201.8ZM229.4,209.8 230.3,210.3 229.8,210.3ZM237.1,199.3 237.6,199.5 237.1,200.5Z"/>
</g></svg>
<svg width="60" height="130" viewBox="250 68 60 130" style="position:absolute;left:8px;top:68px">
  <g fill="#0a4a0a">
    <rect x="269" y="74.5" width="18" height="55" rx="9"/>
    <rect x="260" y="92.5" width="36" height="18.5" rx="9.2"/>
    <rect x="269" y="134" width="18" height="54" rx="9"/>
  </g>
  <g fill="#fff">
    <path d="M278 79.5 L283 88 L273 88Z"/>
    <path d="M278 125 L283 116.5 L273 116.5Z"/>
    <path d="M264 101.7 L273 96.7 L273 106.7Z"/>
    <path d="M292 101.7 L283 96.7 L283 106.7Z"/>
    <rect x="273" y="143.2" width="10.4" height="2"/>
    <rect x="277.2" y="139" width="2" height="10.4"/>
    <rect x="273" y="176.8" width="10.4" height="2"/>
  </g>
  <g fill="none" stroke="#c4c2f4" stroke-width=".6">
    <circle cx="278" cy="161" r="7.8" fill="#1d4a3c"/>
    <ellipse cx="278" cy="161" rx="3.6" ry="7.8"/>
    <path d="M278 153.2V168.8M270.2 161H285.8M271.4 157H284.6M271.4 165H284.6"/>
  </g>
</svg>
  <div id="legend"><span style="left:1px">0</span><span style="left:90px">75,100</span></div>
  <div class="hl" style="top:427px"></div>
  <div class="ttl" style="left:20px;top:438px">Report View by Selection</div>
  <div class="lnk" style="left:624px;top:438px;letter-spacing:-.2px">Customize</div>
  <div class="hl" style="top:463px"></div>
  <div id="thead">
    <div style="left:-5px;top:3px">Total:</div><div style="left:2px;top:19px">15</div>
    <div style="left:64px;top:11px">Research Fields</div>
    <div style="left:199px;top:3px">Web of Science</div><div style="left:208px;top:19px">Documents</div>
    <div style="left:342px;top:11px;color:#3a6ea5;letter-spacing:-.45px">Cites</div>
    <div style="left:378px;top:17px;width:0;height:0;border-left:4px solid transparent;border-right:4px solid transparent;border-top:4px solid #5b8fd6"></div>
    <div style="left:441px;top:11px">Cites/Paper</div>
    <div style="left:576px;top:11px;letter-spacing:-.25px">Top Papers</div>
  </div>
  <div id="rows">
    <div class="r" style="top:0px;height:25px"><span class="n" style="top:3px">1</span><span class="f" style="top:5px">CHEMISTRY</span><span class="d" style="top:3px">3,434</span><span class="c" style="top:3px">66,934</span><span class="p" style="top:3px">19.49</span><div class="bar" style="top:2px"><em>67</em><i style="width:88px"><em>67</em></i></div></div>
    <div class="r" style="top:25px;height:34px"><span class="n" style="top:8px">2</span><span class="f" style="top:3px">MATERIALS<br>SCIENCE</span><span class="d" style="top:8px">2,439</span><span class="c" style="top:8px">61,222</span><span class="p" style="top:8px">25.10</span><div class="bar" style="top:7px"><em>42</em><i style="width:65px"><em>42</em></i></div></div>
    <div class="r" style="top:59px;height:34px"><span class="n" style="top:8px">3</span><span class="f" style="top:3px">CLINICAL<br>MEDICINE</span><span class="d" style="top:8px">1,601</span><span class="c" style="top:8px">24,161</span><span class="p" style="top:8px">15.09</span><div class="bar" style="top:7px"><em>20</em><i style="width:31px"><em>20</em></i></div></div>
    <div class="r" style="top:93px;height:34px"><span class="n" style="top:8px">4</span><span class="f" style="top:3px">PLANT &amp; ANIMAL<br>SCIENCE</span><span class="d" style="top:8px">1,025</span><span class="c" style="top:8px">23,598</span><span class="p" style="top:8px">23.02</span><div class="bar" style="top:7px"><em>63</em><i style="width:98px"><em>63</em></i></div></div>
    <div class="r" style="top:127px;height:26px"><span class="n" style="top:4px">5</span><span class="f" style="top:5.5px">ENGINEERING</span><span class="d" style="top:4px">1,328</span><span class="c" style="top:4px">22,967</span><span class="p" style="top:4px">17.29</span><div class="bar" style="top:3px"><em>33</em><i style="width:51px"><em>33</em></i></div></div>
    <div class="r" style="top:153px;height:34px"><span class="n" style="top:8px">6</span><span class="f" style="top:3px">ENVIRONMENT/E<br>COLOGY</span><span class="d" style="top:8px">1,230</span><span class="c" style="top:8px">22,672</span><span class="p" style="top:8px">18.43</span><div class="bar" style="top:7px"><em>24</em><i style="width:37px"><em>24</em></i></div></div>
    <div class="r" style="top:187px;height:26px"><span class="n" style="top:4px">7</span><span class="f" style="top:5.5px">PHYSICS</span><span class="d" style="top:4px">1,390</span><span class="c" style="top:4px">20,040</span><span class="p" style="top:4px">14.42</span><div class="bar" style="top:3px"><em>36</em><i style="width:56px"><em>36</em></i></div></div>
    <div class="r" style="top:213px;height:48px"><span class="n" style="top:15px">8</span><span class="f" style="top:2px">MOLECULAR<br>BIOLOGY &amp;<br>GENETICS</span><span class="d" style="top:15px">759</span><span class="c" style="top:15px">15,982</span><span class="p" style="top:15px">21.06</span><div class="bar" style="top:14px"><em>6</em><i style="width:9px"><em>6</em></i></div></div>
    <div class="r" style="top:261px;height:33px"><span class="n" style="top:7px">9</span><span class="f" style="top:2px">BIOLOGY &amp;<br>BIOCHEMISTRY</span><span class="d" style="top:7px">794</span><span class="c" style="top:7px">14,983</span><span class="p" style="top:7px">18.87</span><div class="bar" style="top:6px"><em>7</em><i style="width:10px"><em>7</em></i></div></div>
    <div class="r" style="top:294px;height:47px"><span class="n" style="top:14px">10</span><span class="f" style="top:3px">PHARMACOLOG<br>Y &amp;<br>TOXICOLOGY</span><span class="d" style="top:14px">740</span><span class="c" style="top:14px">13,502</span><span class="p" style="top:14px">18.25</span><div class="bar" style="top:14px"><em>4</em><i style="width:6px"><em>4</em></i></div></div>
  </div>
  <!-- vertical scrollbar -->
  <div style="position:absolute;left:693px;top:502px;width:17px;height:346px;background:#f1f1f1"></div>
  <div style="position:absolute;left:695px;top:518px;width:13px;height:212px;background:#c1c1c1"></div>
  <div style="position:absolute;left:698px;top:508px;width:0;height:0;border-left:4px solid transparent;border-right:4px solid transparent;border-bottom:4px solid #a3a3a3"></div>
  <div style="position:absolute;left:698px;top:836px;width:0;height:0;border-left:4px solid transparent;border-right:4px solid transparent;border-top:4px solid #505050"></div>
  <!-- horizontal scrollbar -->
  <div style="position:absolute;left:0;top:848px;width:693px;height:14px;background:#f1f1f1"></div><div style="position:absolute;left:693px;top:848px;width:17px;height:14px;background:#dcdcdc"></div>
  <div style="position:absolute;left:33px;top:850px;width:643px;height:12px;background:#c1c1c1"></div>
  <div style="position:absolute;left:6px;top:851px;width:0;height:0;border-top:4px solid transparent;border-bottom:4px solid transparent;border-right:4px solid #505050"></div>
  <div style="position:absolute;left:684px;top:851px;width:0;height:0;border-top:4px solid transparent;border-bottom:4px solid transparent;border-left:4px solid #a3a3a3"></div>
  <!-- highlight annotation -->
  <div style="position:absolute;left:-2px;top:682px;width:714px;height:39px;border:3px solid #f8200f;border-radius:4px"></div>
</div>
</body>
</html>
